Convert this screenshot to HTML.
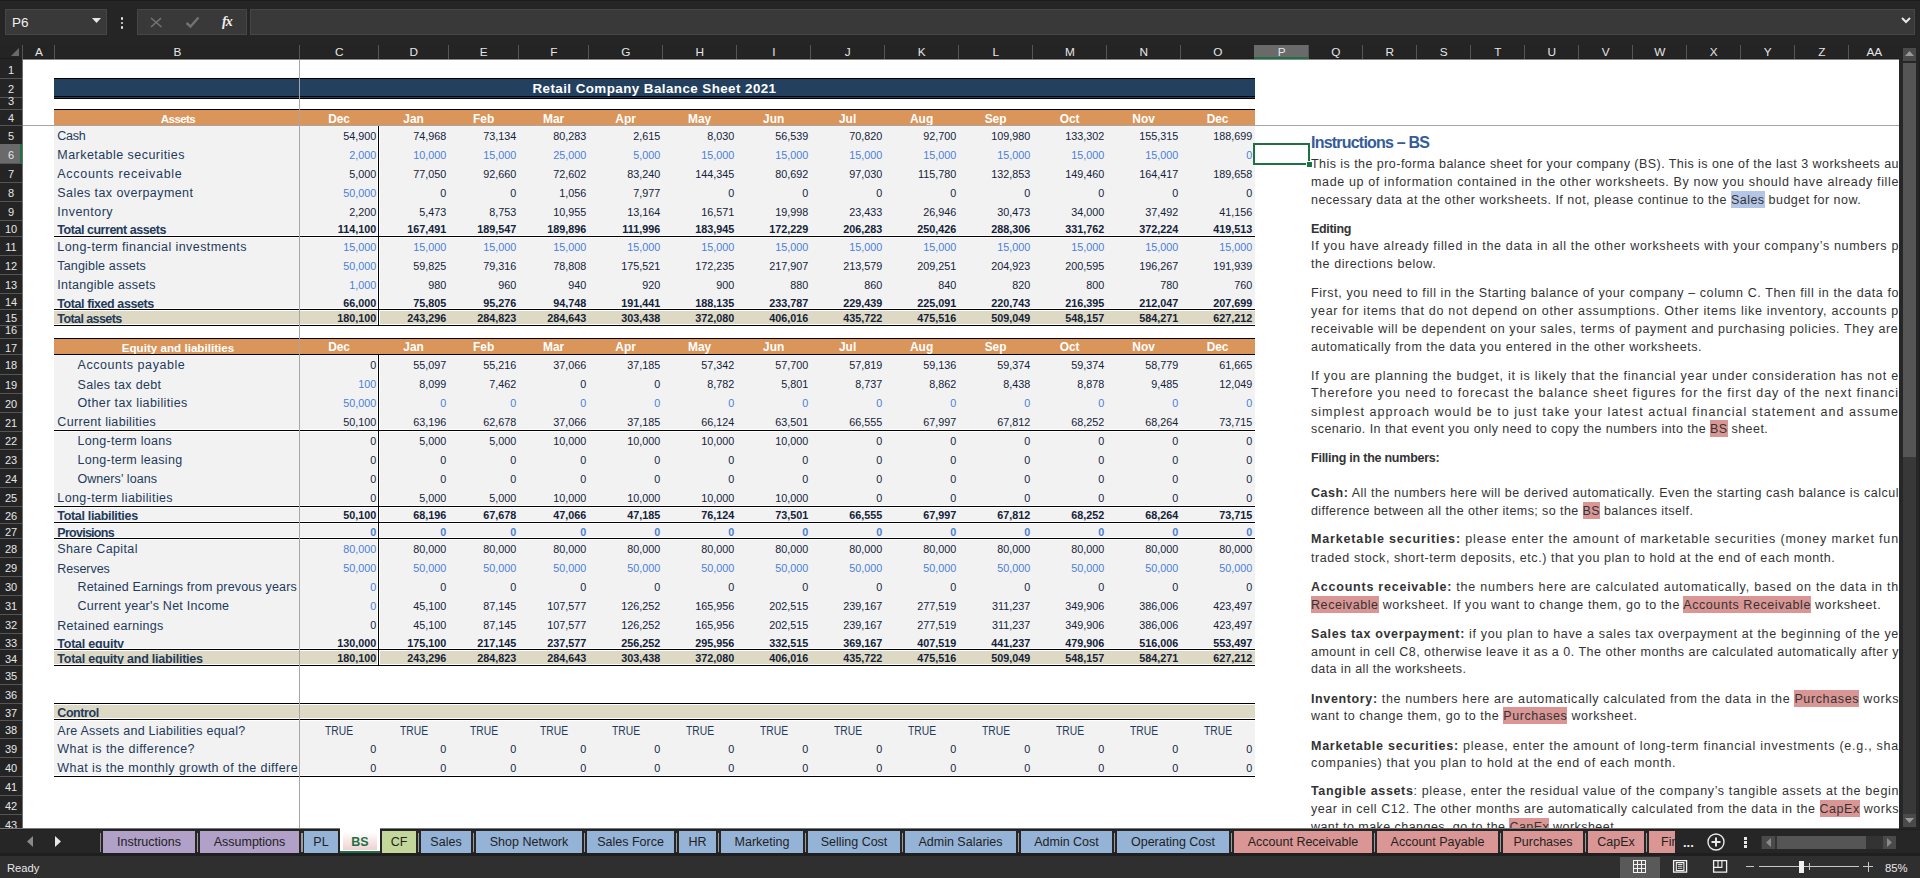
<!DOCTYPE html>
<html><head><meta charset="utf-8"><style>
html,body{margin:0;padding:0;width:1920px;height:878px;overflow:hidden;background:#202020;font-family:"Liberation Sans",sans-serif;}
</style></head><body><div style="position:relative;width:1920px;height:878px;overflow:hidden"><div style="position:absolute;left:0px;top:0px;width:1920px;height:45px;background:#252525"></div><div style="position:absolute;left:0px;top:0px;width:1920px;height:1px;background:#1c1c1c"></div><div style="position:absolute;left:5px;top:9px;width:102px;height:26px;background:#393939;border:1px solid #464646;box-sizing:border-box"></div><div style="position:absolute;top:16.27px;font-family:'Liberation Sans',sans-serif;font-size:13.5px;line-height:13.5px;font-weight:normal;color:#f0f0f0;white-space:nowrap;left:12.00px;">P6</div><svg style="position:absolute;left:92px;top:18px" width="9" height="6"><path d="M0 0 L9 0 L4.5 5z" fill="#e8e8e8"/></svg><div style="position:absolute;left:120.5px;top:17px;width:2.5px;height:2.5px;background:#e8e8e8;border-radius:1px"></div><div style="position:absolute;left:120.5px;top:21.5px;width:2.5px;height:2.5px;background:#e8e8e8;border-radius:1px"></div><div style="position:absolute;left:120.5px;top:26px;width:2.5px;height:2.5px;background:#e8e8e8;border-radius:1px"></div><div style="position:absolute;left:137px;top:9px;width:110px;height:26px;background:#393939;border:1px solid #464646;box-sizing:border-box"></div><svg style="position:absolute;left:150px;top:17px" width="13" height="11"><path d="M1 1 L11.5 10 M11 1.2 L1 10" stroke="#727272" stroke-width="1.6"/></svg><svg style="position:absolute;left:185px;top:16px" width="15" height="13"><path d="M1.5 7 L5.5 10.5 L13.5 1.5" stroke="#727272" stroke-width="2.4" fill="none"/></svg><div style="position:absolute;top:15.25px;font-family:'Liberation Serif',sans-serif;font-size:14px;line-height:14px;font-weight:bold;color:#f0f0f0;white-space:nowrap;font-style:italic;letter-spacing:-1px;left:222.00px;">fx</div><div style="position:absolute;left:250px;top:9px;width:1665px;height:26px;background:#393939;border:1px solid #464646;box-sizing:border-box"></div><svg style="position:absolute;left:1901px;top:17px" width="10" height="7"><path d="M1 1 L5 5 L9 1" stroke="#e8e8e8" stroke-width="2" fill="none"/></svg><div style="position:absolute;left:0px;top:45px;width:1920px;height:14px;background:#242424"></div><div style="position:absolute;left:0px;top:58px;width:1899px;height:1px;background:#1c1c1c"></div><div style="position:absolute;left:0px;top:59px;width:1899px;height:1px;background:#8a8a8a"></div><svg style="position:absolute;left:11px;top:48px" width="8" height="8"><path d="M8 0 L8 8 L0 8z" fill="#6a6a6a"/></svg><div style="position:absolute;left:22px;top:45px;width:1px;height:14px;background:#555"></div><div style="position:absolute;left:54px;top:45px;width:1px;height:14px;background:#555"></div><div style="position:absolute;left:299px;top:45px;width:1px;height:14px;background:#555"></div><div style="position:absolute;left:378px;top:45px;width:1px;height:14px;background:#555"></div><div style="position:absolute;left:448px;top:45px;width:1px;height:14px;background:#555"></div><div style="position:absolute;left:518px;top:45px;width:1px;height:14px;background:#555"></div><div style="position:absolute;left:588px;top:45px;width:1px;height:14px;background:#555"></div><div style="position:absolute;left:662px;top:45px;width:1px;height:14px;background:#555"></div><div style="position:absolute;left:736px;top:45px;width:1px;height:14px;background:#555"></div><div style="position:absolute;left:810px;top:45px;width:1px;height:14px;background:#555"></div><div style="position:absolute;left:884px;top:45px;width:1px;height:14px;background:#555"></div><div style="position:absolute;left:958px;top:45px;width:1px;height:14px;background:#555"></div><div style="position:absolute;left:1032px;top:45px;width:1px;height:14px;background:#555"></div><div style="position:absolute;left:1106px;top:45px;width:1px;height:14px;background:#555"></div><div style="position:absolute;left:1180px;top:45px;width:1px;height:14px;background:#555"></div><div style="position:absolute;left:1254px;top:45px;width:1px;height:14px;background:#555"></div><div style="position:absolute;left:1308px;top:45px;width:1px;height:14px;background:#555"></div><div style="position:absolute;left:1362px;top:45px;width:1px;height:14px;background:#555"></div><div style="position:absolute;left:1416px;top:45px;width:1px;height:14px;background:#555"></div><div style="position:absolute;left:1470px;top:45px;width:1px;height:14px;background:#555"></div><div style="position:absolute;left:1524px;top:45px;width:1px;height:14px;background:#555"></div><div style="position:absolute;left:1578px;top:45px;width:1px;height:14px;background:#555"></div><div style="position:absolute;left:1632px;top:45px;width:1px;height:14px;background:#555"></div><div style="position:absolute;left:1686px;top:45px;width:1px;height:14px;background:#555"></div><div style="position:absolute;left:1740px;top:45px;width:1px;height:14px;background:#555"></div><div style="position:absolute;left:1794px;top:45px;width:1px;height:14px;background:#555"></div><div style="position:absolute;left:1848px;top:45px;width:1px;height:14px;background:#555"></div><div style="position:absolute;left:1254px;top:45px;width:54px;height:14px;background:#6a6a6a"></div><div style="position:absolute;left:1254px;top:57px;width:54px;height:2px;background:#1e7145"></div><div style="position:absolute;top:46.71px;font-family:'Liberation Sans',sans-serif;font-size:11.8px;line-height:11.8px;font-weight:normal;color:#e6e6e6;white-space:nowrap;left:-261.20px;width:600px;text-align:center;">A</div><div style="position:absolute;top:46.71px;font-family:'Liberation Sans',sans-serif;font-size:11.8px;line-height:11.8px;font-weight:normal;color:#e6e6e6;white-space:nowrap;left:-122.70px;width:600px;text-align:center;">B</div><div style="position:absolute;top:46.71px;font-family:'Liberation Sans',sans-serif;font-size:11.8px;line-height:11.8px;font-weight:normal;color:#e6e6e6;white-space:nowrap;left:39.30px;width:600px;text-align:center;">C</div><div style="position:absolute;top:46.71px;font-family:'Liberation Sans',sans-serif;font-size:11.8px;line-height:11.8px;font-weight:normal;color:#e6e6e6;white-space:nowrap;left:113.80px;width:600px;text-align:center;">D</div><div style="position:absolute;top:46.71px;font-family:'Liberation Sans',sans-serif;font-size:11.8px;line-height:11.8px;font-weight:normal;color:#e6e6e6;white-space:nowrap;left:183.80px;width:600px;text-align:center;">E</div><div style="position:absolute;top:46.71px;font-family:'Liberation Sans',sans-serif;font-size:11.8px;line-height:11.8px;font-weight:normal;color:#e6e6e6;white-space:nowrap;left:253.80px;width:600px;text-align:center;">F</div><div style="position:absolute;top:46.71px;font-family:'Liberation Sans',sans-serif;font-size:11.8px;line-height:11.8px;font-weight:normal;color:#e6e6e6;white-space:nowrap;left:325.80px;width:600px;text-align:center;">G</div><div style="position:absolute;top:46.71px;font-family:'Liberation Sans',sans-serif;font-size:11.8px;line-height:11.8px;font-weight:normal;color:#e6e6e6;white-space:nowrap;left:399.80px;width:600px;text-align:center;">H</div><div style="position:absolute;top:46.71px;font-family:'Liberation Sans',sans-serif;font-size:11.8px;line-height:11.8px;font-weight:normal;color:#e6e6e6;white-space:nowrap;left:473.80px;width:600px;text-align:center;">I</div><div style="position:absolute;top:46.71px;font-family:'Liberation Sans',sans-serif;font-size:11.8px;line-height:11.8px;font-weight:normal;color:#e6e6e6;white-space:nowrap;left:547.80px;width:600px;text-align:center;">J</div><div style="position:absolute;top:46.71px;font-family:'Liberation Sans',sans-serif;font-size:11.8px;line-height:11.8px;font-weight:normal;color:#e6e6e6;white-space:nowrap;left:621.80px;width:600px;text-align:center;">K</div><div style="position:absolute;top:46.71px;font-family:'Liberation Sans',sans-serif;font-size:11.8px;line-height:11.8px;font-weight:normal;color:#e6e6e6;white-space:nowrap;left:695.80px;width:600px;text-align:center;">L</div><div style="position:absolute;top:46.71px;font-family:'Liberation Sans',sans-serif;font-size:11.8px;line-height:11.8px;font-weight:normal;color:#e6e6e6;white-space:nowrap;left:769.80px;width:600px;text-align:center;">M</div><div style="position:absolute;top:46.71px;font-family:'Liberation Sans',sans-serif;font-size:11.8px;line-height:11.8px;font-weight:normal;color:#e6e6e6;white-space:nowrap;left:843.80px;width:600px;text-align:center;">N</div><div style="position:absolute;top:46.71px;font-family:'Liberation Sans',sans-serif;font-size:11.8px;line-height:11.8px;font-weight:normal;color:#e6e6e6;white-space:nowrap;left:917.80px;width:600px;text-align:center;">O</div><div style="position:absolute;top:46.71px;font-family:'Liberation Sans',sans-serif;font-size:11.8px;line-height:11.8px;font-weight:normal;color:#e6e6e6;white-space:nowrap;left:981.80px;width:600px;text-align:center;">P</div><div style="position:absolute;top:46.71px;font-family:'Liberation Sans',sans-serif;font-size:11.8px;line-height:11.8px;font-weight:normal;color:#e6e6e6;white-space:nowrap;left:1035.80px;width:600px;text-align:center;">Q</div><div style="position:absolute;top:46.71px;font-family:'Liberation Sans',sans-serif;font-size:11.8px;line-height:11.8px;font-weight:normal;color:#e6e6e6;white-space:nowrap;left:1089.80px;width:600px;text-align:center;">R</div><div style="position:absolute;top:46.71px;font-family:'Liberation Sans',sans-serif;font-size:11.8px;line-height:11.8px;font-weight:normal;color:#e6e6e6;white-space:nowrap;left:1143.80px;width:600px;text-align:center;">S</div><div style="position:absolute;top:46.71px;font-family:'Liberation Sans',sans-serif;font-size:11.8px;line-height:11.8px;font-weight:normal;color:#e6e6e6;white-space:nowrap;left:1197.80px;width:600px;text-align:center;">T</div><div style="position:absolute;top:46.71px;font-family:'Liberation Sans',sans-serif;font-size:11.8px;line-height:11.8px;font-weight:normal;color:#e6e6e6;white-space:nowrap;left:1251.80px;width:600px;text-align:center;">U</div><div style="position:absolute;top:46.71px;font-family:'Liberation Sans',sans-serif;font-size:11.8px;line-height:11.8px;font-weight:normal;color:#e6e6e6;white-space:nowrap;left:1305.80px;width:600px;text-align:center;">V</div><div style="position:absolute;top:46.71px;font-family:'Liberation Sans',sans-serif;font-size:11.8px;line-height:11.8px;font-weight:normal;color:#e6e6e6;white-space:nowrap;left:1359.80px;width:600px;text-align:center;">W</div><div style="position:absolute;top:46.71px;font-family:'Liberation Sans',sans-serif;font-size:11.8px;line-height:11.8px;font-weight:normal;color:#e6e6e6;white-space:nowrap;left:1413.80px;width:600px;text-align:center;">X</div><div style="position:absolute;top:46.71px;font-family:'Liberation Sans',sans-serif;font-size:11.8px;line-height:11.8px;font-weight:normal;color:#e6e6e6;white-space:nowrap;left:1467.80px;width:600px;text-align:center;">Y</div><div style="position:absolute;top:46.71px;font-family:'Liberation Sans',sans-serif;font-size:11.8px;line-height:11.8px;font-weight:normal;color:#e6e6e6;white-space:nowrap;left:1521.80px;width:600px;text-align:center;">Z</div><div style="position:absolute;top:46.71px;font-family:'Liberation Sans',sans-serif;font-size:11.8px;line-height:11.8px;font-weight:normal;color:#e6e6e6;white-space:nowrap;left:1574.30px;width:600px;text-align:center;">AA</div><div style="position:absolute;left:0px;top:59px;width:22px;height:769px;background:#242424"></div><div style="position:absolute;left:22px;top:59px;width:1px;height:769px;background:#6e6e6e"></div><div style="position:absolute;left:0px;top:78px;width:22px;height:1px;background:#555"></div><div style="position:absolute;top:64.59px;font-family:'Liberation Sans',sans-serif;font-size:11px;line-height:11px;font-weight:normal;color:#e6e6e6;white-space:nowrap;left:-289.00px;width:600px;text-align:center;">1</div><div style="position:absolute;left:0px;top:97px;width:22px;height:1px;background:#555"></div><div style="position:absolute;top:83.59px;font-family:'Liberation Sans',sans-serif;font-size:11px;line-height:11px;font-weight:normal;color:#e6e6e6;white-space:nowrap;left:-289.00px;width:600px;text-align:center;">2</div><div style="position:absolute;left:0px;top:109px;width:22px;height:1px;background:#555"></div><div style="position:absolute;top:96.49px;font-family:'Liberation Sans',sans-serif;font-size:11px;line-height:11px;font-weight:normal;color:#e6e6e6;white-space:nowrap;left:-289.00px;width:600px;text-align:center;">3</div><div style="position:absolute;left:0px;top:125px;width:22px;height:1px;background:#555"></div><div style="position:absolute;top:113.09px;font-family:'Liberation Sans',sans-serif;font-size:11px;line-height:11px;font-weight:normal;color:#e6e6e6;white-space:nowrap;left:-289.00px;width:600px;text-align:center;">4</div><div style="position:absolute;left:0px;top:144px;width:22px;height:1px;background:#555"></div><div style="position:absolute;top:130.59px;font-family:'Liberation Sans',sans-serif;font-size:11px;line-height:11px;font-weight:normal;color:#e6e6e6;white-space:nowrap;left:-289.00px;width:600px;text-align:center;">5</div><div style="position:absolute;left:0px;top:144px;width:22px;height:19.5px;background:#6a6a6a"></div><div style="position:absolute;left:20px;top:144px;width:2px;height:19.5px;background:#1e7145"></div><div style="position:absolute;left:0px;top:163px;width:22px;height:1px;background:#555"></div><div style="position:absolute;top:149.84px;font-family:'Liberation Sans',sans-serif;font-size:11px;line-height:11px;font-weight:normal;color:#e6e6e6;white-space:nowrap;left:-289.00px;width:600px;text-align:center;">6</div><div style="position:absolute;left:0px;top:182px;width:22px;height:1px;background:#555"></div><div style="position:absolute;top:169.09px;font-family:'Liberation Sans',sans-serif;font-size:11px;line-height:11px;font-weight:normal;color:#e6e6e6;white-space:nowrap;left:-289.00px;width:600px;text-align:center;">7</div><div style="position:absolute;left:0px;top:201px;width:22px;height:1px;background:#555"></div><div style="position:absolute;top:188.09px;font-family:'Liberation Sans',sans-serif;font-size:11px;line-height:11px;font-weight:normal;color:#e6e6e6;white-space:nowrap;left:-289.00px;width:600px;text-align:center;">8</div><div style="position:absolute;left:0px;top:220px;width:22px;height:1px;background:#555"></div><div style="position:absolute;top:207.09px;font-family:'Liberation Sans',sans-serif;font-size:11px;line-height:11px;font-weight:normal;color:#e6e6e6;white-space:nowrap;left:-289.00px;width:600px;text-align:center;">9</div><div style="position:absolute;left:0px;top:236px;width:22px;height:1px;background:#555"></div><div style="position:absolute;top:224.34px;font-family:'Liberation Sans',sans-serif;font-size:11px;line-height:11px;font-weight:normal;color:#e6e6e6;white-space:nowrap;left:-289.00px;width:600px;text-align:center;">10</div><div style="position:absolute;left:0px;top:255px;width:22px;height:1px;background:#555"></div><div style="position:absolute;top:241.59px;font-family:'Liberation Sans',sans-serif;font-size:11px;line-height:11px;font-weight:normal;color:#e6e6e6;white-space:nowrap;left:-289.00px;width:600px;text-align:center;">11</div><div style="position:absolute;left:0px;top:274px;width:22px;height:1px;background:#555"></div><div style="position:absolute;top:260.59px;font-family:'Liberation Sans',sans-serif;font-size:11px;line-height:11px;font-weight:normal;color:#e6e6e6;white-space:nowrap;left:-289.00px;width:600px;text-align:center;">12</div><div style="position:absolute;left:0px;top:293px;width:22px;height:1px;background:#555"></div><div style="position:absolute;top:279.84px;font-family:'Liberation Sans',sans-serif;font-size:11px;line-height:11px;font-weight:normal;color:#e6e6e6;white-space:nowrap;left:-289.00px;width:600px;text-align:center;">13</div><div style="position:absolute;left:0px;top:309px;width:22px;height:1px;background:#555"></div><div style="position:absolute;top:297.34px;font-family:'Liberation Sans',sans-serif;font-size:11px;line-height:11px;font-weight:normal;color:#e6e6e6;white-space:nowrap;left:-289.00px;width:600px;text-align:center;">14</div><div style="position:absolute;left:0px;top:325px;width:22px;height:1px;background:#555"></div><div style="position:absolute;top:313.34px;font-family:'Liberation Sans',sans-serif;font-size:11px;line-height:11px;font-weight:normal;color:#e6e6e6;white-space:nowrap;left:-289.00px;width:600px;text-align:center;">15</div><div style="position:absolute;left:0px;top:338px;width:22px;height:1px;background:#555"></div><div style="position:absolute;top:325.49px;font-family:'Liberation Sans',sans-serif;font-size:11px;line-height:11px;font-weight:normal;color:#e6e6e6;white-space:nowrap;left:-289.00px;width:600px;text-align:center;">16</div><div style="position:absolute;left:0px;top:354px;width:22px;height:1px;background:#555"></div><div style="position:absolute;top:342.59px;font-family:'Liberation Sans',sans-serif;font-size:11px;line-height:11px;font-weight:normal;color:#e6e6e6;white-space:nowrap;left:-289.00px;width:600px;text-align:center;">17</div><div style="position:absolute;left:0px;top:374px;width:22px;height:1px;background:#555"></div><div style="position:absolute;top:360.34px;font-family:'Liberation Sans',sans-serif;font-size:11px;line-height:11px;font-weight:normal;color:#e6e6e6;white-space:nowrap;left:-289.00px;width:600px;text-align:center;">18</div><div style="position:absolute;left:0px;top:393px;width:22px;height:1px;background:#555"></div><div style="position:absolute;top:379.59px;font-family:'Liberation Sans',sans-serif;font-size:11px;line-height:11px;font-weight:normal;color:#e6e6e6;white-space:nowrap;left:-289.00px;width:600px;text-align:center;">19</div><div style="position:absolute;left:0px;top:412px;width:22px;height:1px;background:#555"></div><div style="position:absolute;top:398.59px;font-family:'Liberation Sans',sans-serif;font-size:11px;line-height:11px;font-weight:normal;color:#e6e6e6;white-space:nowrap;left:-289.00px;width:600px;text-align:center;">20</div><div style="position:absolute;left:0px;top:431px;width:22px;height:1px;background:#555"></div><div style="position:absolute;top:417.59px;font-family:'Liberation Sans',sans-serif;font-size:11px;line-height:11px;font-weight:normal;color:#e6e6e6;white-space:nowrap;left:-289.00px;width:600px;text-align:center;">21</div><div style="position:absolute;left:0px;top:449px;width:22px;height:1px;background:#555"></div><div style="position:absolute;top:436.34px;font-family:'Liberation Sans',sans-serif;font-size:11px;line-height:11px;font-weight:normal;color:#e6e6e6;white-space:nowrap;left:-289.00px;width:600px;text-align:center;">22</div><div style="position:absolute;left:0px;top:468px;width:22px;height:1px;background:#555"></div><div style="position:absolute;top:455.09px;font-family:'Liberation Sans',sans-serif;font-size:11px;line-height:11px;font-weight:normal;color:#e6e6e6;white-space:nowrap;left:-289.00px;width:600px;text-align:center;">23</div><div style="position:absolute;left:0px;top:487px;width:22px;height:1px;background:#555"></div><div style="position:absolute;top:474.09px;font-family:'Liberation Sans',sans-serif;font-size:11px;line-height:11px;font-weight:normal;color:#e6e6e6;white-space:nowrap;left:-289.00px;width:600px;text-align:center;">24</div><div style="position:absolute;left:0px;top:506px;width:22px;height:1px;background:#555"></div><div style="position:absolute;top:493.09px;font-family:'Liberation Sans',sans-serif;font-size:11px;line-height:11px;font-weight:normal;color:#e6e6e6;white-space:nowrap;left:-289.00px;width:600px;text-align:center;">25</div><div style="position:absolute;left:0px;top:523px;width:22px;height:1px;background:#555"></div><div style="position:absolute;top:510.84px;font-family:'Liberation Sans',sans-serif;font-size:11px;line-height:11px;font-weight:normal;color:#e6e6e6;white-space:nowrap;left:-289.00px;width:600px;text-align:center;">26</div><div style="position:absolute;left:0px;top:538px;width:22px;height:1px;background:#555"></div><div style="position:absolute;top:526.84px;font-family:'Liberation Sans',sans-serif;font-size:11px;line-height:11px;font-weight:normal;color:#e6e6e6;white-space:nowrap;left:-289.00px;width:600px;text-align:center;">27</div><div style="position:absolute;left:0px;top:557px;width:22px;height:1px;background:#555"></div><div style="position:absolute;top:544.09px;font-family:'Liberation Sans',sans-serif;font-size:11px;line-height:11px;font-weight:normal;color:#e6e6e6;white-space:nowrap;left:-289.00px;width:600px;text-align:center;">28</div><div style="position:absolute;left:0px;top:576px;width:22px;height:1px;background:#555"></div><div style="position:absolute;top:563.09px;font-family:'Liberation Sans',sans-serif;font-size:11px;line-height:11px;font-weight:normal;color:#e6e6e6;white-space:nowrap;left:-289.00px;width:600px;text-align:center;">29</div><div style="position:absolute;left:0px;top:595px;width:22px;height:1px;background:#555"></div><div style="position:absolute;top:582.09px;font-family:'Liberation Sans',sans-serif;font-size:11px;line-height:11px;font-weight:normal;color:#e6e6e6;white-space:nowrap;left:-289.00px;width:600px;text-align:center;">30</div><div style="position:absolute;left:0px;top:614px;width:22px;height:1px;background:#555"></div><div style="position:absolute;top:601.09px;font-family:'Liberation Sans',sans-serif;font-size:11px;line-height:11px;font-weight:normal;color:#e6e6e6;white-space:nowrap;left:-289.00px;width:600px;text-align:center;">31</div><div style="position:absolute;left:0px;top:633px;width:22px;height:1px;background:#555"></div><div style="position:absolute;top:620.09px;font-family:'Liberation Sans',sans-serif;font-size:11px;line-height:11px;font-weight:normal;color:#e6e6e6;white-space:nowrap;left:-289.00px;width:600px;text-align:center;">32</div><div style="position:absolute;left:0px;top:649px;width:22px;height:1px;background:#555"></div><div style="position:absolute;top:637.59px;font-family:'Liberation Sans',sans-serif;font-size:11px;line-height:11px;font-weight:normal;color:#e6e6e6;white-space:nowrap;left:-289.00px;width:600px;text-align:center;">33</div><div style="position:absolute;left:0px;top:665px;width:22px;height:1px;background:#555"></div><div style="position:absolute;top:653.59px;font-family:'Liberation Sans',sans-serif;font-size:11px;line-height:11px;font-weight:normal;color:#e6e6e6;white-space:nowrap;left:-289.00px;width:600px;text-align:center;">34</div><div style="position:absolute;left:0px;top:684px;width:22px;height:1px;background:#555"></div><div style="position:absolute;top:671.09px;font-family:'Liberation Sans',sans-serif;font-size:11px;line-height:11px;font-weight:normal;color:#e6e6e6;white-space:nowrap;left:-289.00px;width:600px;text-align:center;">35</div><div style="position:absolute;left:0px;top:703px;width:22px;height:1px;background:#555"></div><div style="position:absolute;top:690.09px;font-family:'Liberation Sans',sans-serif;font-size:11px;line-height:11px;font-weight:normal;color:#e6e6e6;white-space:nowrap;left:-289.00px;width:600px;text-align:center;">36</div><div style="position:absolute;left:0px;top:720px;width:22px;height:1px;background:#555"></div><div style="position:absolute;top:707.84px;font-family:'Liberation Sans',sans-serif;font-size:11px;line-height:11px;font-weight:normal;color:#e6e6e6;white-space:nowrap;left:-289.00px;width:600px;text-align:center;">37</div><div style="position:absolute;left:0px;top:738px;width:22px;height:1px;background:#555"></div><div style="position:absolute;top:725.34px;font-family:'Liberation Sans',sans-serif;font-size:11px;line-height:11px;font-weight:normal;color:#e6e6e6;white-space:nowrap;left:-289.00px;width:600px;text-align:center;">38</div><div style="position:absolute;left:0px;top:757px;width:22px;height:1px;background:#555"></div><div style="position:absolute;top:744.09px;font-family:'Liberation Sans',sans-serif;font-size:11px;line-height:11px;font-weight:normal;color:#e6e6e6;white-space:nowrap;left:-289.00px;width:600px;text-align:center;">39</div><div style="position:absolute;left:0px;top:776px;width:22px;height:1px;background:#555"></div><div style="position:absolute;top:763.09px;font-family:'Liberation Sans',sans-serif;font-size:11px;line-height:11px;font-weight:normal;color:#e6e6e6;white-space:nowrap;left:-289.00px;width:600px;text-align:center;">40</div><div style="position:absolute;left:0px;top:795px;width:22px;height:1px;background:#555"></div><div style="position:absolute;top:782.09px;font-family:'Liberation Sans',sans-serif;font-size:11px;line-height:11px;font-weight:normal;color:#e6e6e6;white-space:nowrap;left:-289.00px;width:600px;text-align:center;">41</div><div style="position:absolute;left:0px;top:814px;width:22px;height:1px;background:#555"></div><div style="position:absolute;top:801.09px;font-family:'Liberation Sans',sans-serif;font-size:11px;line-height:11px;font-weight:normal;color:#e6e6e6;white-space:nowrap;left:-289.00px;width:600px;text-align:center;">42</div><div style="position:absolute;top:820.09px;font-family:'Liberation Sans',sans-serif;font-size:11px;line-height:11px;font-weight:normal;color:#e6e6e6;white-space:nowrap;left:-289.00px;width:600px;text-align:center;">43</div><div style="position:absolute;left:23px;top:60px;width:1876px;height:768px;background:#fff"></div><div style="position:absolute;left:54px;top:78px;width:1201px;height:21px;background:#23405f"></div><div style="position:absolute;left:54px;top:78px;width:1201px;height:1px;background:#000"></div><div style="position:absolute;left:54px;top:96px;width:1201px;height:1px;background:#000"></div><div style="position:absolute;left:54px;top:98px;width:1201px;height:1px;background:#000"></div><div style="position:absolute;top:82.26px;font-family:'Liberation Sans',sans-serif;font-size:13.4px;line-height:13.4px;font-weight:bold;color:#fff;white-space:nowrap;letter-spacing:0.425px;left:354.50px;width:600px;text-align:center;">Retail Company Balance Sheet 2021</div><div style="position:absolute;left:54px;top:109px;width:1201px;height:16px;background:#da955b"></div><div style="position:absolute;left:54px;top:109px;width:1201px;height:1px;background:#000"></div><div style="position:absolute;top:113.28px;font-family:'Liberation Sans',sans-serif;font-size:11.6px;line-height:11.6px;font-weight:bold;color:#fff;white-space:nowrap;letter-spacing:-0.622px;left:-122.00px;width:600px;text-align:center;">Assets</div><div style="position:absolute;top:113.93px;font-family:'Liberation Sans',sans-serif;font-size:11.9px;line-height:11.9px;font-weight:bold;color:#fff;white-space:nowrap;left:39.10px;width:600px;text-align:center;">Dec</div><div style="position:absolute;top:113.93px;font-family:'Liberation Sans',sans-serif;font-size:11.9px;line-height:11.9px;font-weight:bold;color:#fff;white-space:nowrap;left:113.60px;width:600px;text-align:center;">Jan</div><div style="position:absolute;top:113.93px;font-family:'Liberation Sans',sans-serif;font-size:11.9px;line-height:11.9px;font-weight:bold;color:#fff;white-space:nowrap;left:183.60px;width:600px;text-align:center;">Feb</div><div style="position:absolute;top:113.93px;font-family:'Liberation Sans',sans-serif;font-size:11.9px;line-height:11.9px;font-weight:bold;color:#fff;white-space:nowrap;left:253.60px;width:600px;text-align:center;">Mar</div><div style="position:absolute;top:113.93px;font-family:'Liberation Sans',sans-serif;font-size:11.9px;line-height:11.9px;font-weight:bold;color:#fff;white-space:nowrap;left:325.60px;width:600px;text-align:center;">Apr</div><div style="position:absolute;top:113.93px;font-family:'Liberation Sans',sans-serif;font-size:11.9px;line-height:11.9px;font-weight:bold;color:#fff;white-space:nowrap;left:399.60px;width:600px;text-align:center;">May</div><div style="position:absolute;top:113.93px;font-family:'Liberation Sans',sans-serif;font-size:11.9px;line-height:11.9px;font-weight:bold;color:#fff;white-space:nowrap;left:473.60px;width:600px;text-align:center;">Jun</div><div style="position:absolute;top:113.93px;font-family:'Liberation Sans',sans-serif;font-size:11.9px;line-height:11.9px;font-weight:bold;color:#fff;white-space:nowrap;left:547.60px;width:600px;text-align:center;">Jul</div><div style="position:absolute;top:113.93px;font-family:'Liberation Sans',sans-serif;font-size:11.9px;line-height:11.9px;font-weight:bold;color:#fff;white-space:nowrap;left:621.60px;width:600px;text-align:center;">Aug</div><div style="position:absolute;top:113.93px;font-family:'Liberation Sans',sans-serif;font-size:11.9px;line-height:11.9px;font-weight:bold;color:#fff;white-space:nowrap;left:695.60px;width:600px;text-align:center;">Sep</div><div style="position:absolute;top:113.93px;font-family:'Liberation Sans',sans-serif;font-size:11.9px;line-height:11.9px;font-weight:bold;color:#fff;white-space:nowrap;left:769.60px;width:600px;text-align:center;">Oct</div><div style="position:absolute;top:113.93px;font-family:'Liberation Sans',sans-serif;font-size:11.9px;line-height:11.9px;font-weight:bold;color:#fff;white-space:nowrap;left:843.60px;width:600px;text-align:center;">Nov</div><div style="position:absolute;top:113.93px;font-family:'Liberation Sans',sans-serif;font-size:11.9px;line-height:11.9px;font-weight:bold;color:#fff;white-space:nowrap;left:917.60px;width:600px;text-align:center;">Dec</div><div style="position:absolute;left:54px;top:125px;width:1201px;height:200px;background:#f2f2f2"></div><div style="position:absolute;left:54px;top:338px;width:1201px;height:16.5px;background:#da955b"></div><div style="position:absolute;left:54px;top:338px;width:1201px;height:1px;background:#000"></div><div style="position:absolute;top:341.58px;font-family:'Liberation Sans',sans-serif;font-size:11.6px;line-height:11.6px;font-weight:bold;color:#fff;white-space:nowrap;letter-spacing:0.018px;left:-122.00px;width:600px;text-align:center;">Equity and liabilities</div><div style="position:absolute;top:342.23px;font-family:'Liberation Sans',sans-serif;font-size:11.9px;line-height:11.9px;font-weight:bold;color:#fff;white-space:nowrap;left:39.10px;width:600px;text-align:center;">Dec</div><div style="position:absolute;top:342.23px;font-family:'Liberation Sans',sans-serif;font-size:11.9px;line-height:11.9px;font-weight:bold;color:#fff;white-space:nowrap;left:113.60px;width:600px;text-align:center;">Jan</div><div style="position:absolute;top:342.23px;font-family:'Liberation Sans',sans-serif;font-size:11.9px;line-height:11.9px;font-weight:bold;color:#fff;white-space:nowrap;left:183.60px;width:600px;text-align:center;">Feb</div><div style="position:absolute;top:342.23px;font-family:'Liberation Sans',sans-serif;font-size:11.9px;line-height:11.9px;font-weight:bold;color:#fff;white-space:nowrap;left:253.60px;width:600px;text-align:center;">Mar</div><div style="position:absolute;top:342.23px;font-family:'Liberation Sans',sans-serif;font-size:11.9px;line-height:11.9px;font-weight:bold;color:#fff;white-space:nowrap;left:325.60px;width:600px;text-align:center;">Apr</div><div style="position:absolute;top:342.23px;font-family:'Liberation Sans',sans-serif;font-size:11.9px;line-height:11.9px;font-weight:bold;color:#fff;white-space:nowrap;left:399.60px;width:600px;text-align:center;">May</div><div style="position:absolute;top:342.23px;font-family:'Liberation Sans',sans-serif;font-size:11.9px;line-height:11.9px;font-weight:bold;color:#fff;white-space:nowrap;left:473.60px;width:600px;text-align:center;">Jun</div><div style="position:absolute;top:342.23px;font-family:'Liberation Sans',sans-serif;font-size:11.9px;line-height:11.9px;font-weight:bold;color:#fff;white-space:nowrap;left:547.60px;width:600px;text-align:center;">Jul</div><div style="position:absolute;top:342.23px;font-family:'Liberation Sans',sans-serif;font-size:11.9px;line-height:11.9px;font-weight:bold;color:#fff;white-space:nowrap;left:621.60px;width:600px;text-align:center;">Aug</div><div style="position:absolute;top:342.23px;font-family:'Liberation Sans',sans-serif;font-size:11.9px;line-height:11.9px;font-weight:bold;color:#fff;white-space:nowrap;left:695.60px;width:600px;text-align:center;">Sep</div><div style="position:absolute;top:342.23px;font-family:'Liberation Sans',sans-serif;font-size:11.9px;line-height:11.9px;font-weight:bold;color:#fff;white-space:nowrap;left:769.60px;width:600px;text-align:center;">Oct</div><div style="position:absolute;top:342.23px;font-family:'Liberation Sans',sans-serif;font-size:11.9px;line-height:11.9px;font-weight:bold;color:#fff;white-space:nowrap;left:843.60px;width:600px;text-align:center;">Nov</div><div style="position:absolute;top:342.23px;font-family:'Liberation Sans',sans-serif;font-size:11.9px;line-height:11.9px;font-weight:bold;color:#fff;white-space:nowrap;left:917.60px;width:600px;text-align:center;">Dec</div><div style="position:absolute;left:54px;top:355px;width:1201px;height:310px;background:#f2f2f2"></div><div style="position:absolute;left:54px;top:704px;width:1201px;height:72px;background:#f2f2f2"></div><div style="position:absolute;left:54px;top:309px;width:1201px;height:16px;background:#ddd9c4"></div><div style="position:absolute;left:54px;top:649px;width:1201px;height:16px;background:#ddd9c4"></div><div style="position:absolute;left:54px;top:703px;width:1201px;height:16px;background:#ddd9c4"></div><div style="position:absolute;top:130.42px;font-family:'Liberation Sans',sans-serif;font-size:12.5px;line-height:12.5px;font-weight:normal;color:#233a5a;white-space:nowrap;letter-spacing:-0.272px;left:57.30px;">Cash</div><div style="position:absolute;top:131.16px;font-family:'Liberation Sans',sans-serif;font-size:10.8px;line-height:10.8px;font-weight:normal;color:#14233a;white-space:nowrap;left:-223.80px;width:600px;text-align:right;">54,900</div><div style="position:absolute;top:131.16px;font-family:'Liberation Sans',sans-serif;font-size:10.8px;line-height:10.8px;font-weight:normal;color:#14233a;white-space:nowrap;left:-153.80px;width:600px;text-align:right;">74,968</div><div style="position:absolute;top:131.16px;font-family:'Liberation Sans',sans-serif;font-size:10.8px;line-height:10.8px;font-weight:normal;color:#14233a;white-space:nowrap;left:-83.80px;width:600px;text-align:right;">73,134</div><div style="position:absolute;top:131.16px;font-family:'Liberation Sans',sans-serif;font-size:10.8px;line-height:10.8px;font-weight:normal;color:#14233a;white-space:nowrap;left:-13.80px;width:600px;text-align:right;">80,283</div><div style="position:absolute;top:131.16px;font-family:'Liberation Sans',sans-serif;font-size:10.8px;line-height:10.8px;font-weight:normal;color:#14233a;white-space:nowrap;left:60.20px;width:600px;text-align:right;">2,615</div><div style="position:absolute;top:131.16px;font-family:'Liberation Sans',sans-serif;font-size:10.8px;line-height:10.8px;font-weight:normal;color:#14233a;white-space:nowrap;left:134.20px;width:600px;text-align:right;">8,030</div><div style="position:absolute;top:131.16px;font-family:'Liberation Sans',sans-serif;font-size:10.8px;line-height:10.8px;font-weight:normal;color:#14233a;white-space:nowrap;left:208.20px;width:600px;text-align:right;">56,539</div><div style="position:absolute;top:131.16px;font-family:'Liberation Sans',sans-serif;font-size:10.8px;line-height:10.8px;font-weight:normal;color:#14233a;white-space:nowrap;left:282.20px;width:600px;text-align:right;">70,820</div><div style="position:absolute;top:131.16px;font-family:'Liberation Sans',sans-serif;font-size:10.8px;line-height:10.8px;font-weight:normal;color:#14233a;white-space:nowrap;left:356.20px;width:600px;text-align:right;">92,700</div><div style="position:absolute;top:131.16px;font-family:'Liberation Sans',sans-serif;font-size:10.8px;line-height:10.8px;font-weight:normal;color:#14233a;white-space:nowrap;left:430.20px;width:600px;text-align:right;">109,980</div><div style="position:absolute;top:131.16px;font-family:'Liberation Sans',sans-serif;font-size:10.8px;line-height:10.8px;font-weight:normal;color:#14233a;white-space:nowrap;left:504.20px;width:600px;text-align:right;">133,302</div><div style="position:absolute;top:131.16px;font-family:'Liberation Sans',sans-serif;font-size:10.8px;line-height:10.8px;font-weight:normal;color:#14233a;white-space:nowrap;left:578.20px;width:600px;text-align:right;">155,315</div><div style="position:absolute;top:131.16px;font-family:'Liberation Sans',sans-serif;font-size:10.8px;line-height:10.8px;font-weight:normal;color:#14233a;white-space:nowrap;left:652.20px;width:600px;text-align:right;">188,699</div><div style="position:absolute;top:149.32px;font-family:'Liberation Sans',sans-serif;font-size:12.5px;line-height:12.5px;font-weight:normal;color:#233a5a;white-space:nowrap;letter-spacing:0.452px;left:57.30px;">Marketable securities</div><div style="position:absolute;top:150.06px;font-family:'Liberation Sans',sans-serif;font-size:10.8px;line-height:10.8px;font-weight:normal;color:#4a7fd6;white-space:nowrap;left:-223.80px;width:600px;text-align:right;">2,000</div><div style="position:absolute;top:150.06px;font-family:'Liberation Sans',sans-serif;font-size:10.8px;line-height:10.8px;font-weight:normal;color:#4a7fd6;white-space:nowrap;left:-153.80px;width:600px;text-align:right;">10,000</div><div style="position:absolute;top:150.06px;font-family:'Liberation Sans',sans-serif;font-size:10.8px;line-height:10.8px;font-weight:normal;color:#4a7fd6;white-space:nowrap;left:-83.80px;width:600px;text-align:right;">15,000</div><div style="position:absolute;top:150.06px;font-family:'Liberation Sans',sans-serif;font-size:10.8px;line-height:10.8px;font-weight:normal;color:#4a7fd6;white-space:nowrap;left:-13.80px;width:600px;text-align:right;">25,000</div><div style="position:absolute;top:150.06px;font-family:'Liberation Sans',sans-serif;font-size:10.8px;line-height:10.8px;font-weight:normal;color:#4a7fd6;white-space:nowrap;left:60.20px;width:600px;text-align:right;">5,000</div><div style="position:absolute;top:150.06px;font-family:'Liberation Sans',sans-serif;font-size:10.8px;line-height:10.8px;font-weight:normal;color:#4a7fd6;white-space:nowrap;left:134.20px;width:600px;text-align:right;">15,000</div><div style="position:absolute;top:150.06px;font-family:'Liberation Sans',sans-serif;font-size:10.8px;line-height:10.8px;font-weight:normal;color:#4a7fd6;white-space:nowrap;left:208.20px;width:600px;text-align:right;">15,000</div><div style="position:absolute;top:150.06px;font-family:'Liberation Sans',sans-serif;font-size:10.8px;line-height:10.8px;font-weight:normal;color:#4a7fd6;white-space:nowrap;left:282.20px;width:600px;text-align:right;">15,000</div><div style="position:absolute;top:150.06px;font-family:'Liberation Sans',sans-serif;font-size:10.8px;line-height:10.8px;font-weight:normal;color:#4a7fd6;white-space:nowrap;left:356.20px;width:600px;text-align:right;">15,000</div><div style="position:absolute;top:150.06px;font-family:'Liberation Sans',sans-serif;font-size:10.8px;line-height:10.8px;font-weight:normal;color:#4a7fd6;white-space:nowrap;left:430.20px;width:600px;text-align:right;">15,000</div><div style="position:absolute;top:150.06px;font-family:'Liberation Sans',sans-serif;font-size:10.8px;line-height:10.8px;font-weight:normal;color:#4a7fd6;white-space:nowrap;left:504.20px;width:600px;text-align:right;">15,000</div><div style="position:absolute;top:150.06px;font-family:'Liberation Sans',sans-serif;font-size:10.8px;line-height:10.8px;font-weight:normal;color:#4a7fd6;white-space:nowrap;left:578.20px;width:600px;text-align:right;">15,000</div><div style="position:absolute;top:150.06px;font-family:'Liberation Sans',sans-serif;font-size:10.8px;line-height:10.8px;font-weight:normal;color:#4a7fd6;white-space:nowrap;left:652.20px;width:600px;text-align:right;">0</div><div style="position:absolute;top:168.02px;font-family:'Liberation Sans',sans-serif;font-size:12.5px;line-height:12.5px;font-weight:normal;color:#233a5a;white-space:nowrap;letter-spacing:0.701px;left:57.30px;">Accounts receivable</div><div style="position:absolute;top:168.76px;font-family:'Liberation Sans',sans-serif;font-size:10.8px;line-height:10.8px;font-weight:normal;color:#14233a;white-space:nowrap;left:-223.80px;width:600px;text-align:right;">5,000</div><div style="position:absolute;top:168.76px;font-family:'Liberation Sans',sans-serif;font-size:10.8px;line-height:10.8px;font-weight:normal;color:#14233a;white-space:nowrap;left:-153.80px;width:600px;text-align:right;">77,050</div><div style="position:absolute;top:168.76px;font-family:'Liberation Sans',sans-serif;font-size:10.8px;line-height:10.8px;font-weight:normal;color:#14233a;white-space:nowrap;left:-83.80px;width:600px;text-align:right;">92,660</div><div style="position:absolute;top:168.76px;font-family:'Liberation Sans',sans-serif;font-size:10.8px;line-height:10.8px;font-weight:normal;color:#14233a;white-space:nowrap;left:-13.80px;width:600px;text-align:right;">72,602</div><div style="position:absolute;top:168.76px;font-family:'Liberation Sans',sans-serif;font-size:10.8px;line-height:10.8px;font-weight:normal;color:#14233a;white-space:nowrap;left:60.20px;width:600px;text-align:right;">83,240</div><div style="position:absolute;top:168.76px;font-family:'Liberation Sans',sans-serif;font-size:10.8px;line-height:10.8px;font-weight:normal;color:#14233a;white-space:nowrap;left:134.20px;width:600px;text-align:right;">144,345</div><div style="position:absolute;top:168.76px;font-family:'Liberation Sans',sans-serif;font-size:10.8px;line-height:10.8px;font-weight:normal;color:#14233a;white-space:nowrap;left:208.20px;width:600px;text-align:right;">80,692</div><div style="position:absolute;top:168.76px;font-family:'Liberation Sans',sans-serif;font-size:10.8px;line-height:10.8px;font-weight:normal;color:#14233a;white-space:nowrap;left:282.20px;width:600px;text-align:right;">97,030</div><div style="position:absolute;top:168.76px;font-family:'Liberation Sans',sans-serif;font-size:10.8px;line-height:10.8px;font-weight:normal;color:#14233a;white-space:nowrap;left:356.20px;width:600px;text-align:right;">115,780</div><div style="position:absolute;top:168.76px;font-family:'Liberation Sans',sans-serif;font-size:10.8px;line-height:10.8px;font-weight:normal;color:#14233a;white-space:nowrap;left:430.20px;width:600px;text-align:right;">132,853</div><div style="position:absolute;top:168.76px;font-family:'Liberation Sans',sans-serif;font-size:10.8px;line-height:10.8px;font-weight:normal;color:#14233a;white-space:nowrap;left:504.20px;width:600px;text-align:right;">149,460</div><div style="position:absolute;top:168.76px;font-family:'Liberation Sans',sans-serif;font-size:10.8px;line-height:10.8px;font-weight:normal;color:#14233a;white-space:nowrap;left:578.20px;width:600px;text-align:right;">164,417</div><div style="position:absolute;top:168.76px;font-family:'Liberation Sans',sans-serif;font-size:10.8px;line-height:10.8px;font-weight:normal;color:#14233a;white-space:nowrap;left:652.20px;width:600px;text-align:right;">189,658</div><div style="position:absolute;top:186.92px;font-family:'Liberation Sans',sans-serif;font-size:12.5px;line-height:12.5px;font-weight:normal;color:#233a5a;white-space:nowrap;letter-spacing:0.426px;left:57.30px;">Sales tax overpayment</div><div style="position:absolute;top:187.66px;font-family:'Liberation Sans',sans-serif;font-size:10.8px;line-height:10.8px;font-weight:normal;color:#4a7fd6;white-space:nowrap;left:-223.80px;width:600px;text-align:right;">50,000</div><div style="position:absolute;top:187.66px;font-family:'Liberation Sans',sans-serif;font-size:10.8px;line-height:10.8px;font-weight:normal;color:#14233a;white-space:nowrap;left:-153.80px;width:600px;text-align:right;">0</div><div style="position:absolute;top:187.66px;font-family:'Liberation Sans',sans-serif;font-size:10.8px;line-height:10.8px;font-weight:normal;color:#14233a;white-space:nowrap;left:-83.80px;width:600px;text-align:right;">0</div><div style="position:absolute;top:187.66px;font-family:'Liberation Sans',sans-serif;font-size:10.8px;line-height:10.8px;font-weight:normal;color:#14233a;white-space:nowrap;left:-13.80px;width:600px;text-align:right;">1,056</div><div style="position:absolute;top:187.66px;font-family:'Liberation Sans',sans-serif;font-size:10.8px;line-height:10.8px;font-weight:normal;color:#14233a;white-space:nowrap;left:60.20px;width:600px;text-align:right;">7,977</div><div style="position:absolute;top:187.66px;font-family:'Liberation Sans',sans-serif;font-size:10.8px;line-height:10.8px;font-weight:normal;color:#14233a;white-space:nowrap;left:134.20px;width:600px;text-align:right;">0</div><div style="position:absolute;top:187.66px;font-family:'Liberation Sans',sans-serif;font-size:10.8px;line-height:10.8px;font-weight:normal;color:#14233a;white-space:nowrap;left:208.20px;width:600px;text-align:right;">0</div><div style="position:absolute;top:187.66px;font-family:'Liberation Sans',sans-serif;font-size:10.8px;line-height:10.8px;font-weight:normal;color:#14233a;white-space:nowrap;left:282.20px;width:600px;text-align:right;">0</div><div style="position:absolute;top:187.66px;font-family:'Liberation Sans',sans-serif;font-size:10.8px;line-height:10.8px;font-weight:normal;color:#14233a;white-space:nowrap;left:356.20px;width:600px;text-align:right;">0</div><div style="position:absolute;top:187.66px;font-family:'Liberation Sans',sans-serif;font-size:10.8px;line-height:10.8px;font-weight:normal;color:#14233a;white-space:nowrap;left:430.20px;width:600px;text-align:right;">0</div><div style="position:absolute;top:187.66px;font-family:'Liberation Sans',sans-serif;font-size:10.8px;line-height:10.8px;font-weight:normal;color:#14233a;white-space:nowrap;left:504.20px;width:600px;text-align:right;">0</div><div style="position:absolute;top:187.66px;font-family:'Liberation Sans',sans-serif;font-size:10.8px;line-height:10.8px;font-weight:normal;color:#14233a;white-space:nowrap;left:578.20px;width:600px;text-align:right;">0</div><div style="position:absolute;top:187.66px;font-family:'Liberation Sans',sans-serif;font-size:10.8px;line-height:10.8px;font-weight:normal;color:#14233a;white-space:nowrap;left:652.20px;width:600px;text-align:right;">0</div><div style="position:absolute;top:205.92px;font-family:'Liberation Sans',sans-serif;font-size:12.5px;line-height:12.5px;font-weight:normal;color:#233a5a;white-space:nowrap;letter-spacing:0.486px;left:57.30px;">Inventory</div><div style="position:absolute;top:206.66px;font-family:'Liberation Sans',sans-serif;font-size:10.8px;line-height:10.8px;font-weight:normal;color:#14233a;white-space:nowrap;left:-223.80px;width:600px;text-align:right;">2,200</div><div style="position:absolute;top:206.66px;font-family:'Liberation Sans',sans-serif;font-size:10.8px;line-height:10.8px;font-weight:normal;color:#14233a;white-space:nowrap;left:-153.80px;width:600px;text-align:right;">5,473</div><div style="position:absolute;top:206.66px;font-family:'Liberation Sans',sans-serif;font-size:10.8px;line-height:10.8px;font-weight:normal;color:#14233a;white-space:nowrap;left:-83.80px;width:600px;text-align:right;">8,753</div><div style="position:absolute;top:206.66px;font-family:'Liberation Sans',sans-serif;font-size:10.8px;line-height:10.8px;font-weight:normal;color:#14233a;white-space:nowrap;left:-13.80px;width:600px;text-align:right;">10,955</div><div style="position:absolute;top:206.66px;font-family:'Liberation Sans',sans-serif;font-size:10.8px;line-height:10.8px;font-weight:normal;color:#14233a;white-space:nowrap;left:60.20px;width:600px;text-align:right;">13,164</div><div style="position:absolute;top:206.66px;font-family:'Liberation Sans',sans-serif;font-size:10.8px;line-height:10.8px;font-weight:normal;color:#14233a;white-space:nowrap;left:134.20px;width:600px;text-align:right;">16,571</div><div style="position:absolute;top:206.66px;font-family:'Liberation Sans',sans-serif;font-size:10.8px;line-height:10.8px;font-weight:normal;color:#14233a;white-space:nowrap;left:208.20px;width:600px;text-align:right;">19,998</div><div style="position:absolute;top:206.66px;font-family:'Liberation Sans',sans-serif;font-size:10.8px;line-height:10.8px;font-weight:normal;color:#14233a;white-space:nowrap;left:282.20px;width:600px;text-align:right;">23,433</div><div style="position:absolute;top:206.66px;font-family:'Liberation Sans',sans-serif;font-size:10.8px;line-height:10.8px;font-weight:normal;color:#14233a;white-space:nowrap;left:356.20px;width:600px;text-align:right;">26,946</div><div style="position:absolute;top:206.66px;font-family:'Liberation Sans',sans-serif;font-size:10.8px;line-height:10.8px;font-weight:normal;color:#14233a;white-space:nowrap;left:430.20px;width:600px;text-align:right;">30,473</div><div style="position:absolute;top:206.66px;font-family:'Liberation Sans',sans-serif;font-size:10.8px;line-height:10.8px;font-weight:normal;color:#14233a;white-space:nowrap;left:504.20px;width:600px;text-align:right;">34,000</div><div style="position:absolute;top:206.66px;font-family:'Liberation Sans',sans-serif;font-size:10.8px;line-height:10.8px;font-weight:normal;color:#14233a;white-space:nowrap;left:578.20px;width:600px;text-align:right;">37,492</div><div style="position:absolute;top:206.66px;font-family:'Liberation Sans',sans-serif;font-size:10.8px;line-height:10.8px;font-weight:normal;color:#14233a;white-space:nowrap;left:652.20px;width:600px;text-align:right;">41,156</div><div style="position:absolute;top:224.02px;font-family:'Liberation Sans',sans-serif;font-size:12.5px;line-height:12.5px;font-weight:bold;color:#233a5a;white-space:nowrap;letter-spacing:-0.464px;left:57.30px;">Total current assets</div><div style="position:absolute;top:224.16px;font-family:'Liberation Sans',sans-serif;font-size:10.8px;line-height:10.8px;font-weight:bold;color:#14233a;white-space:nowrap;left:-223.80px;width:600px;text-align:right;">114,100</div><div style="position:absolute;top:224.16px;font-family:'Liberation Sans',sans-serif;font-size:10.8px;line-height:10.8px;font-weight:bold;color:#14233a;white-space:nowrap;left:-153.80px;width:600px;text-align:right;">167,491</div><div style="position:absolute;top:224.16px;font-family:'Liberation Sans',sans-serif;font-size:10.8px;line-height:10.8px;font-weight:bold;color:#14233a;white-space:nowrap;left:-83.80px;width:600px;text-align:right;">189,547</div><div style="position:absolute;top:224.16px;font-family:'Liberation Sans',sans-serif;font-size:10.8px;line-height:10.8px;font-weight:bold;color:#14233a;white-space:nowrap;left:-13.80px;width:600px;text-align:right;">189,896</div><div style="position:absolute;top:224.16px;font-family:'Liberation Sans',sans-serif;font-size:10.8px;line-height:10.8px;font-weight:bold;color:#14233a;white-space:nowrap;left:60.20px;width:600px;text-align:right;">111,996</div><div style="position:absolute;top:224.16px;font-family:'Liberation Sans',sans-serif;font-size:10.8px;line-height:10.8px;font-weight:bold;color:#14233a;white-space:nowrap;left:134.20px;width:600px;text-align:right;">183,945</div><div style="position:absolute;top:224.16px;font-family:'Liberation Sans',sans-serif;font-size:10.8px;line-height:10.8px;font-weight:bold;color:#14233a;white-space:nowrap;left:208.20px;width:600px;text-align:right;">172,229</div><div style="position:absolute;top:224.16px;font-family:'Liberation Sans',sans-serif;font-size:10.8px;line-height:10.8px;font-weight:bold;color:#14233a;white-space:nowrap;left:282.20px;width:600px;text-align:right;">206,283</div><div style="position:absolute;top:224.16px;font-family:'Liberation Sans',sans-serif;font-size:10.8px;line-height:10.8px;font-weight:bold;color:#14233a;white-space:nowrap;left:356.20px;width:600px;text-align:right;">250,426</div><div style="position:absolute;top:224.16px;font-family:'Liberation Sans',sans-serif;font-size:10.8px;line-height:10.8px;font-weight:bold;color:#14233a;white-space:nowrap;left:430.20px;width:600px;text-align:right;">288,306</div><div style="position:absolute;top:224.16px;font-family:'Liberation Sans',sans-serif;font-size:10.8px;line-height:10.8px;font-weight:bold;color:#14233a;white-space:nowrap;left:504.20px;width:600px;text-align:right;">331,762</div><div style="position:absolute;top:224.16px;font-family:'Liberation Sans',sans-serif;font-size:10.8px;line-height:10.8px;font-weight:bold;color:#14233a;white-space:nowrap;left:578.20px;width:600px;text-align:right;">372,224</div><div style="position:absolute;top:224.16px;font-family:'Liberation Sans',sans-serif;font-size:10.8px;line-height:10.8px;font-weight:bold;color:#14233a;white-space:nowrap;left:652.20px;width:600px;text-align:right;">419,513</div><div style="position:absolute;top:241.32px;font-family:'Liberation Sans',sans-serif;font-size:12.5px;line-height:12.5px;font-weight:normal;color:#233a5a;white-space:nowrap;letter-spacing:0.423px;left:57.30px;">Long-term financial investments</div><div style="position:absolute;top:242.06px;font-family:'Liberation Sans',sans-serif;font-size:10.8px;line-height:10.8px;font-weight:normal;color:#4a7fd6;white-space:nowrap;left:-223.80px;width:600px;text-align:right;">15,000</div><div style="position:absolute;top:242.06px;font-family:'Liberation Sans',sans-serif;font-size:10.8px;line-height:10.8px;font-weight:normal;color:#4a7fd6;white-space:nowrap;left:-153.80px;width:600px;text-align:right;">15,000</div><div style="position:absolute;top:242.06px;font-family:'Liberation Sans',sans-serif;font-size:10.8px;line-height:10.8px;font-weight:normal;color:#4a7fd6;white-space:nowrap;left:-83.80px;width:600px;text-align:right;">15,000</div><div style="position:absolute;top:242.06px;font-family:'Liberation Sans',sans-serif;font-size:10.8px;line-height:10.8px;font-weight:normal;color:#4a7fd6;white-space:nowrap;left:-13.80px;width:600px;text-align:right;">15,000</div><div style="position:absolute;top:242.06px;font-family:'Liberation Sans',sans-serif;font-size:10.8px;line-height:10.8px;font-weight:normal;color:#4a7fd6;white-space:nowrap;left:60.20px;width:600px;text-align:right;">15,000</div><div style="position:absolute;top:242.06px;font-family:'Liberation Sans',sans-serif;font-size:10.8px;line-height:10.8px;font-weight:normal;color:#4a7fd6;white-space:nowrap;left:134.20px;width:600px;text-align:right;">15,000</div><div style="position:absolute;top:242.06px;font-family:'Liberation Sans',sans-serif;font-size:10.8px;line-height:10.8px;font-weight:normal;color:#4a7fd6;white-space:nowrap;left:208.20px;width:600px;text-align:right;">15,000</div><div style="position:absolute;top:242.06px;font-family:'Liberation Sans',sans-serif;font-size:10.8px;line-height:10.8px;font-weight:normal;color:#4a7fd6;white-space:nowrap;left:282.20px;width:600px;text-align:right;">15,000</div><div style="position:absolute;top:242.06px;font-family:'Liberation Sans',sans-serif;font-size:10.8px;line-height:10.8px;font-weight:normal;color:#4a7fd6;white-space:nowrap;left:356.20px;width:600px;text-align:right;">15,000</div><div style="position:absolute;top:242.06px;font-family:'Liberation Sans',sans-serif;font-size:10.8px;line-height:10.8px;font-weight:normal;color:#4a7fd6;white-space:nowrap;left:430.20px;width:600px;text-align:right;">15,000</div><div style="position:absolute;top:242.06px;font-family:'Liberation Sans',sans-serif;font-size:10.8px;line-height:10.8px;font-weight:normal;color:#4a7fd6;white-space:nowrap;left:504.20px;width:600px;text-align:right;">15,000</div><div style="position:absolute;top:242.06px;font-family:'Liberation Sans',sans-serif;font-size:10.8px;line-height:10.8px;font-weight:normal;color:#4a7fd6;white-space:nowrap;left:578.20px;width:600px;text-align:right;">15,000</div><div style="position:absolute;top:242.06px;font-family:'Liberation Sans',sans-serif;font-size:10.8px;line-height:10.8px;font-weight:normal;color:#4a7fd6;white-space:nowrap;left:652.20px;width:600px;text-align:right;">15,000</div><div style="position:absolute;top:260.02px;font-family:'Liberation Sans',sans-serif;font-size:12.5px;line-height:12.5px;font-weight:normal;color:#233a5a;white-space:nowrap;letter-spacing:0.169px;left:57.30px;">Tangible assets</div><div style="position:absolute;top:260.76px;font-family:'Liberation Sans',sans-serif;font-size:10.8px;line-height:10.8px;font-weight:normal;color:#4a7fd6;white-space:nowrap;left:-223.80px;width:600px;text-align:right;">50,000</div><div style="position:absolute;top:260.76px;font-family:'Liberation Sans',sans-serif;font-size:10.8px;line-height:10.8px;font-weight:normal;color:#14233a;white-space:nowrap;left:-153.80px;width:600px;text-align:right;">59,825</div><div style="position:absolute;top:260.76px;font-family:'Liberation Sans',sans-serif;font-size:10.8px;line-height:10.8px;font-weight:normal;color:#14233a;white-space:nowrap;left:-83.80px;width:600px;text-align:right;">79,316</div><div style="position:absolute;top:260.76px;font-family:'Liberation Sans',sans-serif;font-size:10.8px;line-height:10.8px;font-weight:normal;color:#14233a;white-space:nowrap;left:-13.80px;width:600px;text-align:right;">78,808</div><div style="position:absolute;top:260.76px;font-family:'Liberation Sans',sans-serif;font-size:10.8px;line-height:10.8px;font-weight:normal;color:#14233a;white-space:nowrap;left:60.20px;width:600px;text-align:right;">175,521</div><div style="position:absolute;top:260.76px;font-family:'Liberation Sans',sans-serif;font-size:10.8px;line-height:10.8px;font-weight:normal;color:#14233a;white-space:nowrap;left:134.20px;width:600px;text-align:right;">172,235</div><div style="position:absolute;top:260.76px;font-family:'Liberation Sans',sans-serif;font-size:10.8px;line-height:10.8px;font-weight:normal;color:#14233a;white-space:nowrap;left:208.20px;width:600px;text-align:right;">217,907</div><div style="position:absolute;top:260.76px;font-family:'Liberation Sans',sans-serif;font-size:10.8px;line-height:10.8px;font-weight:normal;color:#14233a;white-space:nowrap;left:282.20px;width:600px;text-align:right;">213,579</div><div style="position:absolute;top:260.76px;font-family:'Liberation Sans',sans-serif;font-size:10.8px;line-height:10.8px;font-weight:normal;color:#14233a;white-space:nowrap;left:356.20px;width:600px;text-align:right;">209,251</div><div style="position:absolute;top:260.76px;font-family:'Liberation Sans',sans-serif;font-size:10.8px;line-height:10.8px;font-weight:normal;color:#14233a;white-space:nowrap;left:430.20px;width:600px;text-align:right;">204,923</div><div style="position:absolute;top:260.76px;font-family:'Liberation Sans',sans-serif;font-size:10.8px;line-height:10.8px;font-weight:normal;color:#14233a;white-space:nowrap;left:504.20px;width:600px;text-align:right;">200,595</div><div style="position:absolute;top:260.76px;font-family:'Liberation Sans',sans-serif;font-size:10.8px;line-height:10.8px;font-weight:normal;color:#14233a;white-space:nowrap;left:578.20px;width:600px;text-align:right;">196,267</div><div style="position:absolute;top:260.76px;font-family:'Liberation Sans',sans-serif;font-size:10.8px;line-height:10.8px;font-weight:normal;color:#14233a;white-space:nowrap;left:652.20px;width:600px;text-align:right;">191,939</div><div style="position:absolute;top:279.12px;font-family:'Liberation Sans',sans-serif;font-size:12.5px;line-height:12.5px;font-weight:normal;color:#233a5a;white-space:nowrap;letter-spacing:0.270px;left:57.30px;">Intangible assets</div><div style="position:absolute;top:279.86px;font-family:'Liberation Sans',sans-serif;font-size:10.8px;line-height:10.8px;font-weight:normal;color:#4a7fd6;white-space:nowrap;left:-223.80px;width:600px;text-align:right;">1,000</div><div style="position:absolute;top:279.86px;font-family:'Liberation Sans',sans-serif;font-size:10.8px;line-height:10.8px;font-weight:normal;color:#14233a;white-space:nowrap;left:-153.80px;width:600px;text-align:right;">980</div><div style="position:absolute;top:279.86px;font-family:'Liberation Sans',sans-serif;font-size:10.8px;line-height:10.8px;font-weight:normal;color:#14233a;white-space:nowrap;left:-83.80px;width:600px;text-align:right;">960</div><div style="position:absolute;top:279.86px;font-family:'Liberation Sans',sans-serif;font-size:10.8px;line-height:10.8px;font-weight:normal;color:#14233a;white-space:nowrap;left:-13.80px;width:600px;text-align:right;">940</div><div style="position:absolute;top:279.86px;font-family:'Liberation Sans',sans-serif;font-size:10.8px;line-height:10.8px;font-weight:normal;color:#14233a;white-space:nowrap;left:60.20px;width:600px;text-align:right;">920</div><div style="position:absolute;top:279.86px;font-family:'Liberation Sans',sans-serif;font-size:10.8px;line-height:10.8px;font-weight:normal;color:#14233a;white-space:nowrap;left:134.20px;width:600px;text-align:right;">900</div><div style="position:absolute;top:279.86px;font-family:'Liberation Sans',sans-serif;font-size:10.8px;line-height:10.8px;font-weight:normal;color:#14233a;white-space:nowrap;left:208.20px;width:600px;text-align:right;">880</div><div style="position:absolute;top:279.86px;font-family:'Liberation Sans',sans-serif;font-size:10.8px;line-height:10.8px;font-weight:normal;color:#14233a;white-space:nowrap;left:282.20px;width:600px;text-align:right;">860</div><div style="position:absolute;top:279.86px;font-family:'Liberation Sans',sans-serif;font-size:10.8px;line-height:10.8px;font-weight:normal;color:#14233a;white-space:nowrap;left:356.20px;width:600px;text-align:right;">840</div><div style="position:absolute;top:279.86px;font-family:'Liberation Sans',sans-serif;font-size:10.8px;line-height:10.8px;font-weight:normal;color:#14233a;white-space:nowrap;left:430.20px;width:600px;text-align:right;">820</div><div style="position:absolute;top:279.86px;font-family:'Liberation Sans',sans-serif;font-size:10.8px;line-height:10.8px;font-weight:normal;color:#14233a;white-space:nowrap;left:504.20px;width:600px;text-align:right;">800</div><div style="position:absolute;top:279.86px;font-family:'Liberation Sans',sans-serif;font-size:10.8px;line-height:10.8px;font-weight:normal;color:#14233a;white-space:nowrap;left:578.20px;width:600px;text-align:right;">780</div><div style="position:absolute;top:279.86px;font-family:'Liberation Sans',sans-serif;font-size:10.8px;line-height:10.8px;font-weight:normal;color:#14233a;white-space:nowrap;left:652.20px;width:600px;text-align:right;">760</div><div style="position:absolute;top:297.52px;font-family:'Liberation Sans',sans-serif;font-size:12.5px;line-height:12.5px;font-weight:bold;color:#233a5a;white-space:nowrap;letter-spacing:-0.416px;left:57.30px;">Total fixed assets</div><div style="position:absolute;top:297.66px;font-family:'Liberation Sans',sans-serif;font-size:10.8px;line-height:10.8px;font-weight:bold;color:#14233a;white-space:nowrap;left:-223.80px;width:600px;text-align:right;">66,000</div><div style="position:absolute;top:297.66px;font-family:'Liberation Sans',sans-serif;font-size:10.8px;line-height:10.8px;font-weight:bold;color:#14233a;white-space:nowrap;left:-153.80px;width:600px;text-align:right;">75,805</div><div style="position:absolute;top:297.66px;font-family:'Liberation Sans',sans-serif;font-size:10.8px;line-height:10.8px;font-weight:bold;color:#14233a;white-space:nowrap;left:-83.80px;width:600px;text-align:right;">95,276</div><div style="position:absolute;top:297.66px;font-family:'Liberation Sans',sans-serif;font-size:10.8px;line-height:10.8px;font-weight:bold;color:#14233a;white-space:nowrap;left:-13.80px;width:600px;text-align:right;">94,748</div><div style="position:absolute;top:297.66px;font-family:'Liberation Sans',sans-serif;font-size:10.8px;line-height:10.8px;font-weight:bold;color:#14233a;white-space:nowrap;left:60.20px;width:600px;text-align:right;">191,441</div><div style="position:absolute;top:297.66px;font-family:'Liberation Sans',sans-serif;font-size:10.8px;line-height:10.8px;font-weight:bold;color:#14233a;white-space:nowrap;left:134.20px;width:600px;text-align:right;">188,135</div><div style="position:absolute;top:297.66px;font-family:'Liberation Sans',sans-serif;font-size:10.8px;line-height:10.8px;font-weight:bold;color:#14233a;white-space:nowrap;left:208.20px;width:600px;text-align:right;">233,787</div><div style="position:absolute;top:297.66px;font-family:'Liberation Sans',sans-serif;font-size:10.8px;line-height:10.8px;font-weight:bold;color:#14233a;white-space:nowrap;left:282.20px;width:600px;text-align:right;">229,439</div><div style="position:absolute;top:297.66px;font-family:'Liberation Sans',sans-serif;font-size:10.8px;line-height:10.8px;font-weight:bold;color:#14233a;white-space:nowrap;left:356.20px;width:600px;text-align:right;">225,091</div><div style="position:absolute;top:297.66px;font-family:'Liberation Sans',sans-serif;font-size:10.8px;line-height:10.8px;font-weight:bold;color:#14233a;white-space:nowrap;left:430.20px;width:600px;text-align:right;">220,743</div><div style="position:absolute;top:297.66px;font-family:'Liberation Sans',sans-serif;font-size:10.8px;line-height:10.8px;font-weight:bold;color:#14233a;white-space:nowrap;left:504.20px;width:600px;text-align:right;">216,395</div><div style="position:absolute;top:297.66px;font-family:'Liberation Sans',sans-serif;font-size:10.8px;line-height:10.8px;font-weight:bold;color:#14233a;white-space:nowrap;left:578.20px;width:600px;text-align:right;">212,047</div><div style="position:absolute;top:297.66px;font-family:'Liberation Sans',sans-serif;font-size:10.8px;line-height:10.8px;font-weight:bold;color:#14233a;white-space:nowrap;left:652.20px;width:600px;text-align:right;">207,699</div><div style="position:absolute;top:312.82px;font-family:'Liberation Sans',sans-serif;font-size:12.5px;line-height:12.5px;font-weight:bold;color:#233a5a;white-space:nowrap;letter-spacing:-0.586px;left:57.30px;">Total assets</div><div style="position:absolute;top:312.96px;font-family:'Liberation Sans',sans-serif;font-size:10.8px;line-height:10.8px;font-weight:bold;color:#14233a;white-space:nowrap;left:-223.80px;width:600px;text-align:right;">180,100</div><div style="position:absolute;top:312.96px;font-family:'Liberation Sans',sans-serif;font-size:10.8px;line-height:10.8px;font-weight:bold;color:#14233a;white-space:nowrap;left:-153.80px;width:600px;text-align:right;">243,296</div><div style="position:absolute;top:312.96px;font-family:'Liberation Sans',sans-serif;font-size:10.8px;line-height:10.8px;font-weight:bold;color:#14233a;white-space:nowrap;left:-83.80px;width:600px;text-align:right;">284,823</div><div style="position:absolute;top:312.96px;font-family:'Liberation Sans',sans-serif;font-size:10.8px;line-height:10.8px;font-weight:bold;color:#14233a;white-space:nowrap;left:-13.80px;width:600px;text-align:right;">284,643</div><div style="position:absolute;top:312.96px;font-family:'Liberation Sans',sans-serif;font-size:10.8px;line-height:10.8px;font-weight:bold;color:#14233a;white-space:nowrap;left:60.20px;width:600px;text-align:right;">303,438</div><div style="position:absolute;top:312.96px;font-family:'Liberation Sans',sans-serif;font-size:10.8px;line-height:10.8px;font-weight:bold;color:#14233a;white-space:nowrap;left:134.20px;width:600px;text-align:right;">372,080</div><div style="position:absolute;top:312.96px;font-family:'Liberation Sans',sans-serif;font-size:10.8px;line-height:10.8px;font-weight:bold;color:#14233a;white-space:nowrap;left:208.20px;width:600px;text-align:right;">406,016</div><div style="position:absolute;top:312.96px;font-family:'Liberation Sans',sans-serif;font-size:10.8px;line-height:10.8px;font-weight:bold;color:#14233a;white-space:nowrap;left:282.20px;width:600px;text-align:right;">435,722</div><div style="position:absolute;top:312.96px;font-family:'Liberation Sans',sans-serif;font-size:10.8px;line-height:10.8px;font-weight:bold;color:#14233a;white-space:nowrap;left:356.20px;width:600px;text-align:right;">475,516</div><div style="position:absolute;top:312.96px;font-family:'Liberation Sans',sans-serif;font-size:10.8px;line-height:10.8px;font-weight:bold;color:#14233a;white-space:nowrap;left:430.20px;width:600px;text-align:right;">509,049</div><div style="position:absolute;top:312.96px;font-family:'Liberation Sans',sans-serif;font-size:10.8px;line-height:10.8px;font-weight:bold;color:#14233a;white-space:nowrap;left:504.20px;width:600px;text-align:right;">548,157</div><div style="position:absolute;top:312.96px;font-family:'Liberation Sans',sans-serif;font-size:10.8px;line-height:10.8px;font-weight:bold;color:#14233a;white-space:nowrap;left:578.20px;width:600px;text-align:right;">584,271</div><div style="position:absolute;top:312.96px;font-family:'Liberation Sans',sans-serif;font-size:10.8px;line-height:10.8px;font-weight:bold;color:#14233a;white-space:nowrap;left:652.20px;width:600px;text-align:right;">627,212</div><div style="position:absolute;top:359.12px;font-family:'Liberation Sans',sans-serif;font-size:12.5px;line-height:12.5px;font-weight:normal;color:#233a5a;white-space:nowrap;letter-spacing:0.576px;left:77.50px;">Accounts payable</div><div style="position:absolute;top:359.86px;font-family:'Liberation Sans',sans-serif;font-size:10.8px;line-height:10.8px;font-weight:normal;color:#14233a;white-space:nowrap;left:-223.80px;width:600px;text-align:right;">0</div><div style="position:absolute;top:359.86px;font-family:'Liberation Sans',sans-serif;font-size:10.8px;line-height:10.8px;font-weight:normal;color:#14233a;white-space:nowrap;left:-153.80px;width:600px;text-align:right;">55,097</div><div style="position:absolute;top:359.86px;font-family:'Liberation Sans',sans-serif;font-size:10.8px;line-height:10.8px;font-weight:normal;color:#14233a;white-space:nowrap;left:-83.80px;width:600px;text-align:right;">55,216</div><div style="position:absolute;top:359.86px;font-family:'Liberation Sans',sans-serif;font-size:10.8px;line-height:10.8px;font-weight:normal;color:#14233a;white-space:nowrap;left:-13.80px;width:600px;text-align:right;">37,066</div><div style="position:absolute;top:359.86px;font-family:'Liberation Sans',sans-serif;font-size:10.8px;line-height:10.8px;font-weight:normal;color:#14233a;white-space:nowrap;left:60.20px;width:600px;text-align:right;">37,185</div><div style="position:absolute;top:359.86px;font-family:'Liberation Sans',sans-serif;font-size:10.8px;line-height:10.8px;font-weight:normal;color:#14233a;white-space:nowrap;left:134.20px;width:600px;text-align:right;">57,342</div><div style="position:absolute;top:359.86px;font-family:'Liberation Sans',sans-serif;font-size:10.8px;line-height:10.8px;font-weight:normal;color:#14233a;white-space:nowrap;left:208.20px;width:600px;text-align:right;">57,700</div><div style="position:absolute;top:359.86px;font-family:'Liberation Sans',sans-serif;font-size:10.8px;line-height:10.8px;font-weight:normal;color:#14233a;white-space:nowrap;left:282.20px;width:600px;text-align:right;">57,819</div><div style="position:absolute;top:359.86px;font-family:'Liberation Sans',sans-serif;font-size:10.8px;line-height:10.8px;font-weight:normal;color:#14233a;white-space:nowrap;left:356.20px;width:600px;text-align:right;">59,136</div><div style="position:absolute;top:359.86px;font-family:'Liberation Sans',sans-serif;font-size:10.8px;line-height:10.8px;font-weight:normal;color:#14233a;white-space:nowrap;left:430.20px;width:600px;text-align:right;">59,374</div><div style="position:absolute;top:359.86px;font-family:'Liberation Sans',sans-serif;font-size:10.8px;line-height:10.8px;font-weight:normal;color:#14233a;white-space:nowrap;left:504.20px;width:600px;text-align:right;">59,374</div><div style="position:absolute;top:359.86px;font-family:'Liberation Sans',sans-serif;font-size:10.8px;line-height:10.8px;font-weight:normal;color:#14233a;white-space:nowrap;left:578.20px;width:600px;text-align:right;">58,779</div><div style="position:absolute;top:359.86px;font-family:'Liberation Sans',sans-serif;font-size:10.8px;line-height:10.8px;font-weight:normal;color:#14233a;white-space:nowrap;left:652.20px;width:600px;text-align:right;">61,665</div><div style="position:absolute;top:378.52px;font-family:'Liberation Sans',sans-serif;font-size:12.5px;line-height:12.5px;font-weight:normal;color:#233a5a;white-space:nowrap;letter-spacing:0.334px;left:77.50px;">Sales tax debt</div><div style="position:absolute;top:379.26px;font-family:'Liberation Sans',sans-serif;font-size:10.8px;line-height:10.8px;font-weight:normal;color:#4a7fd6;white-space:nowrap;left:-223.80px;width:600px;text-align:right;">100</div><div style="position:absolute;top:379.26px;font-family:'Liberation Sans',sans-serif;font-size:10.8px;line-height:10.8px;font-weight:normal;color:#14233a;white-space:nowrap;left:-153.80px;width:600px;text-align:right;">8,099</div><div style="position:absolute;top:379.26px;font-family:'Liberation Sans',sans-serif;font-size:10.8px;line-height:10.8px;font-weight:normal;color:#14233a;white-space:nowrap;left:-83.80px;width:600px;text-align:right;">7,462</div><div style="position:absolute;top:379.26px;font-family:'Liberation Sans',sans-serif;font-size:10.8px;line-height:10.8px;font-weight:normal;color:#14233a;white-space:nowrap;left:-13.80px;width:600px;text-align:right;">0</div><div style="position:absolute;top:379.26px;font-family:'Liberation Sans',sans-serif;font-size:10.8px;line-height:10.8px;font-weight:normal;color:#14233a;white-space:nowrap;left:60.20px;width:600px;text-align:right;">0</div><div style="position:absolute;top:379.26px;font-family:'Liberation Sans',sans-serif;font-size:10.8px;line-height:10.8px;font-weight:normal;color:#14233a;white-space:nowrap;left:134.20px;width:600px;text-align:right;">8,782</div><div style="position:absolute;top:379.26px;font-family:'Liberation Sans',sans-serif;font-size:10.8px;line-height:10.8px;font-weight:normal;color:#14233a;white-space:nowrap;left:208.20px;width:600px;text-align:right;">5,801</div><div style="position:absolute;top:379.26px;font-family:'Liberation Sans',sans-serif;font-size:10.8px;line-height:10.8px;font-weight:normal;color:#14233a;white-space:nowrap;left:282.20px;width:600px;text-align:right;">8,737</div><div style="position:absolute;top:379.26px;font-family:'Liberation Sans',sans-serif;font-size:10.8px;line-height:10.8px;font-weight:normal;color:#14233a;white-space:nowrap;left:356.20px;width:600px;text-align:right;">8,862</div><div style="position:absolute;top:379.26px;font-family:'Liberation Sans',sans-serif;font-size:10.8px;line-height:10.8px;font-weight:normal;color:#14233a;white-space:nowrap;left:430.20px;width:600px;text-align:right;">8,438</div><div style="position:absolute;top:379.26px;font-family:'Liberation Sans',sans-serif;font-size:10.8px;line-height:10.8px;font-weight:normal;color:#14233a;white-space:nowrap;left:504.20px;width:600px;text-align:right;">8,878</div><div style="position:absolute;top:379.26px;font-family:'Liberation Sans',sans-serif;font-size:10.8px;line-height:10.8px;font-weight:normal;color:#14233a;white-space:nowrap;left:578.20px;width:600px;text-align:right;">9,485</div><div style="position:absolute;top:379.26px;font-family:'Liberation Sans',sans-serif;font-size:10.8px;line-height:10.8px;font-weight:normal;color:#14233a;white-space:nowrap;left:652.20px;width:600px;text-align:right;">12,049</div><div style="position:absolute;top:397.42px;font-family:'Liberation Sans',sans-serif;font-size:12.5px;line-height:12.5px;font-weight:normal;color:#233a5a;white-space:nowrap;letter-spacing:0.385px;left:77.50px;">Other tax liabilities</div><div style="position:absolute;top:398.16px;font-family:'Liberation Sans',sans-serif;font-size:10.8px;line-height:10.8px;font-weight:normal;color:#4a7fd6;white-space:nowrap;left:-223.80px;width:600px;text-align:right;">50,000</div><div style="position:absolute;top:398.16px;font-family:'Liberation Sans',sans-serif;font-size:10.8px;line-height:10.8px;font-weight:normal;color:#4a7fd6;white-space:nowrap;left:-153.80px;width:600px;text-align:right;">0</div><div style="position:absolute;top:398.16px;font-family:'Liberation Sans',sans-serif;font-size:10.8px;line-height:10.8px;font-weight:normal;color:#4a7fd6;white-space:nowrap;left:-83.80px;width:600px;text-align:right;">0</div><div style="position:absolute;top:398.16px;font-family:'Liberation Sans',sans-serif;font-size:10.8px;line-height:10.8px;font-weight:normal;color:#4a7fd6;white-space:nowrap;left:-13.80px;width:600px;text-align:right;">0</div><div style="position:absolute;top:398.16px;font-family:'Liberation Sans',sans-serif;font-size:10.8px;line-height:10.8px;font-weight:normal;color:#4a7fd6;white-space:nowrap;left:60.20px;width:600px;text-align:right;">0</div><div style="position:absolute;top:398.16px;font-family:'Liberation Sans',sans-serif;font-size:10.8px;line-height:10.8px;font-weight:normal;color:#4a7fd6;white-space:nowrap;left:134.20px;width:600px;text-align:right;">0</div><div style="position:absolute;top:398.16px;font-family:'Liberation Sans',sans-serif;font-size:10.8px;line-height:10.8px;font-weight:normal;color:#4a7fd6;white-space:nowrap;left:208.20px;width:600px;text-align:right;">0</div><div style="position:absolute;top:398.16px;font-family:'Liberation Sans',sans-serif;font-size:10.8px;line-height:10.8px;font-weight:normal;color:#4a7fd6;white-space:nowrap;left:282.20px;width:600px;text-align:right;">0</div><div style="position:absolute;top:398.16px;font-family:'Liberation Sans',sans-serif;font-size:10.8px;line-height:10.8px;font-weight:normal;color:#4a7fd6;white-space:nowrap;left:356.20px;width:600px;text-align:right;">0</div><div style="position:absolute;top:398.16px;font-family:'Liberation Sans',sans-serif;font-size:10.8px;line-height:10.8px;font-weight:normal;color:#4a7fd6;white-space:nowrap;left:430.20px;width:600px;text-align:right;">0</div><div style="position:absolute;top:398.16px;font-family:'Liberation Sans',sans-serif;font-size:10.8px;line-height:10.8px;font-weight:normal;color:#4a7fd6;white-space:nowrap;left:504.20px;width:600px;text-align:right;">0</div><div style="position:absolute;top:398.16px;font-family:'Liberation Sans',sans-serif;font-size:10.8px;line-height:10.8px;font-weight:normal;color:#4a7fd6;white-space:nowrap;left:578.20px;width:600px;text-align:right;">0</div><div style="position:absolute;top:398.16px;font-family:'Liberation Sans',sans-serif;font-size:10.8px;line-height:10.8px;font-weight:normal;color:#4a7fd6;white-space:nowrap;left:652.20px;width:600px;text-align:right;">0</div><div style="position:absolute;top:416.42px;font-family:'Liberation Sans',sans-serif;font-size:12.5px;line-height:12.5px;font-weight:normal;color:#233a5a;white-space:nowrap;letter-spacing:0.337px;left:57.30px;">Current liabilities</div><div style="position:absolute;top:417.16px;font-family:'Liberation Sans',sans-serif;font-size:10.8px;line-height:10.8px;font-weight:normal;color:#14233a;white-space:nowrap;left:-223.80px;width:600px;text-align:right;">50,100</div><div style="position:absolute;top:417.16px;font-family:'Liberation Sans',sans-serif;font-size:10.8px;line-height:10.8px;font-weight:normal;color:#14233a;white-space:nowrap;left:-153.80px;width:600px;text-align:right;">63,196</div><div style="position:absolute;top:417.16px;font-family:'Liberation Sans',sans-serif;font-size:10.8px;line-height:10.8px;font-weight:normal;color:#14233a;white-space:nowrap;left:-83.80px;width:600px;text-align:right;">62,678</div><div style="position:absolute;top:417.16px;font-family:'Liberation Sans',sans-serif;font-size:10.8px;line-height:10.8px;font-weight:normal;color:#14233a;white-space:nowrap;left:-13.80px;width:600px;text-align:right;">37,066</div><div style="position:absolute;top:417.16px;font-family:'Liberation Sans',sans-serif;font-size:10.8px;line-height:10.8px;font-weight:normal;color:#14233a;white-space:nowrap;left:60.20px;width:600px;text-align:right;">37,185</div><div style="position:absolute;top:417.16px;font-family:'Liberation Sans',sans-serif;font-size:10.8px;line-height:10.8px;font-weight:normal;color:#14233a;white-space:nowrap;left:134.20px;width:600px;text-align:right;">66,124</div><div style="position:absolute;top:417.16px;font-family:'Liberation Sans',sans-serif;font-size:10.8px;line-height:10.8px;font-weight:normal;color:#14233a;white-space:nowrap;left:208.20px;width:600px;text-align:right;">63,501</div><div style="position:absolute;top:417.16px;font-family:'Liberation Sans',sans-serif;font-size:10.8px;line-height:10.8px;font-weight:normal;color:#14233a;white-space:nowrap;left:282.20px;width:600px;text-align:right;">66,555</div><div style="position:absolute;top:417.16px;font-family:'Liberation Sans',sans-serif;font-size:10.8px;line-height:10.8px;font-weight:normal;color:#14233a;white-space:nowrap;left:356.20px;width:600px;text-align:right;">67,997</div><div style="position:absolute;top:417.16px;font-family:'Liberation Sans',sans-serif;font-size:10.8px;line-height:10.8px;font-weight:normal;color:#14233a;white-space:nowrap;left:430.20px;width:600px;text-align:right;">67,812</div><div style="position:absolute;top:417.16px;font-family:'Liberation Sans',sans-serif;font-size:10.8px;line-height:10.8px;font-weight:normal;color:#14233a;white-space:nowrap;left:504.20px;width:600px;text-align:right;">68,252</div><div style="position:absolute;top:417.16px;font-family:'Liberation Sans',sans-serif;font-size:10.8px;line-height:10.8px;font-weight:normal;color:#14233a;white-space:nowrap;left:578.20px;width:600px;text-align:right;">68,264</div><div style="position:absolute;top:417.16px;font-family:'Liberation Sans',sans-serif;font-size:10.8px;line-height:10.8px;font-weight:normal;color:#14233a;white-space:nowrap;left:652.20px;width:600px;text-align:right;">73,715</div><div style="position:absolute;top:435.32px;font-family:'Liberation Sans',sans-serif;font-size:12.5px;line-height:12.5px;font-weight:normal;color:#233a5a;white-space:nowrap;letter-spacing:0.285px;left:77.50px;">Long-term loans</div><div style="position:absolute;top:436.06px;font-family:'Liberation Sans',sans-serif;font-size:10.8px;line-height:10.8px;font-weight:normal;color:#14233a;white-space:nowrap;left:-223.80px;width:600px;text-align:right;">0</div><div style="position:absolute;top:436.06px;font-family:'Liberation Sans',sans-serif;font-size:10.8px;line-height:10.8px;font-weight:normal;color:#14233a;white-space:nowrap;left:-153.80px;width:600px;text-align:right;">5,000</div><div style="position:absolute;top:436.06px;font-family:'Liberation Sans',sans-serif;font-size:10.8px;line-height:10.8px;font-weight:normal;color:#14233a;white-space:nowrap;left:-83.80px;width:600px;text-align:right;">5,000</div><div style="position:absolute;top:436.06px;font-family:'Liberation Sans',sans-serif;font-size:10.8px;line-height:10.8px;font-weight:normal;color:#14233a;white-space:nowrap;left:-13.80px;width:600px;text-align:right;">10,000</div><div style="position:absolute;top:436.06px;font-family:'Liberation Sans',sans-serif;font-size:10.8px;line-height:10.8px;font-weight:normal;color:#14233a;white-space:nowrap;left:60.20px;width:600px;text-align:right;">10,000</div><div style="position:absolute;top:436.06px;font-family:'Liberation Sans',sans-serif;font-size:10.8px;line-height:10.8px;font-weight:normal;color:#14233a;white-space:nowrap;left:134.20px;width:600px;text-align:right;">10,000</div><div style="position:absolute;top:436.06px;font-family:'Liberation Sans',sans-serif;font-size:10.8px;line-height:10.8px;font-weight:normal;color:#14233a;white-space:nowrap;left:208.20px;width:600px;text-align:right;">10,000</div><div style="position:absolute;top:436.06px;font-family:'Liberation Sans',sans-serif;font-size:10.8px;line-height:10.8px;font-weight:normal;color:#14233a;white-space:nowrap;left:282.20px;width:600px;text-align:right;">0</div><div style="position:absolute;top:436.06px;font-family:'Liberation Sans',sans-serif;font-size:10.8px;line-height:10.8px;font-weight:normal;color:#14233a;white-space:nowrap;left:356.20px;width:600px;text-align:right;">0</div><div style="position:absolute;top:436.06px;font-family:'Liberation Sans',sans-serif;font-size:10.8px;line-height:10.8px;font-weight:normal;color:#14233a;white-space:nowrap;left:430.20px;width:600px;text-align:right;">0</div><div style="position:absolute;top:436.06px;font-family:'Liberation Sans',sans-serif;font-size:10.8px;line-height:10.8px;font-weight:normal;color:#14233a;white-space:nowrap;left:504.20px;width:600px;text-align:right;">0</div><div style="position:absolute;top:436.06px;font-family:'Liberation Sans',sans-serif;font-size:10.8px;line-height:10.8px;font-weight:normal;color:#14233a;white-space:nowrap;left:578.20px;width:600px;text-align:right;">0</div><div style="position:absolute;top:436.06px;font-family:'Liberation Sans',sans-serif;font-size:10.8px;line-height:10.8px;font-weight:normal;color:#14233a;white-space:nowrap;left:652.20px;width:600px;text-align:right;">0</div><div style="position:absolute;top:454.42px;font-family:'Liberation Sans',sans-serif;font-size:12.5px;line-height:12.5px;font-weight:normal;color:#233a5a;white-space:nowrap;letter-spacing:0.285px;left:77.50px;">Long-term leasing</div><div style="position:absolute;top:455.16px;font-family:'Liberation Sans',sans-serif;font-size:10.8px;line-height:10.8px;font-weight:normal;color:#14233a;white-space:nowrap;left:-223.80px;width:600px;text-align:right;">0</div><div style="position:absolute;top:455.16px;font-family:'Liberation Sans',sans-serif;font-size:10.8px;line-height:10.8px;font-weight:normal;color:#14233a;white-space:nowrap;left:-153.80px;width:600px;text-align:right;">0</div><div style="position:absolute;top:455.16px;font-family:'Liberation Sans',sans-serif;font-size:10.8px;line-height:10.8px;font-weight:normal;color:#14233a;white-space:nowrap;left:-83.80px;width:600px;text-align:right;">0</div><div style="position:absolute;top:455.16px;font-family:'Liberation Sans',sans-serif;font-size:10.8px;line-height:10.8px;font-weight:normal;color:#14233a;white-space:nowrap;left:-13.80px;width:600px;text-align:right;">0</div><div style="position:absolute;top:455.16px;font-family:'Liberation Sans',sans-serif;font-size:10.8px;line-height:10.8px;font-weight:normal;color:#14233a;white-space:nowrap;left:60.20px;width:600px;text-align:right;">0</div><div style="position:absolute;top:455.16px;font-family:'Liberation Sans',sans-serif;font-size:10.8px;line-height:10.8px;font-weight:normal;color:#14233a;white-space:nowrap;left:134.20px;width:600px;text-align:right;">0</div><div style="position:absolute;top:455.16px;font-family:'Liberation Sans',sans-serif;font-size:10.8px;line-height:10.8px;font-weight:normal;color:#14233a;white-space:nowrap;left:208.20px;width:600px;text-align:right;">0</div><div style="position:absolute;top:455.16px;font-family:'Liberation Sans',sans-serif;font-size:10.8px;line-height:10.8px;font-weight:normal;color:#14233a;white-space:nowrap;left:282.20px;width:600px;text-align:right;">0</div><div style="position:absolute;top:455.16px;font-family:'Liberation Sans',sans-serif;font-size:10.8px;line-height:10.8px;font-weight:normal;color:#14233a;white-space:nowrap;left:356.20px;width:600px;text-align:right;">0</div><div style="position:absolute;top:455.16px;font-family:'Liberation Sans',sans-serif;font-size:10.8px;line-height:10.8px;font-weight:normal;color:#14233a;white-space:nowrap;left:430.20px;width:600px;text-align:right;">0</div><div style="position:absolute;top:455.16px;font-family:'Liberation Sans',sans-serif;font-size:10.8px;line-height:10.8px;font-weight:normal;color:#14233a;white-space:nowrap;left:504.20px;width:600px;text-align:right;">0</div><div style="position:absolute;top:455.16px;font-family:'Liberation Sans',sans-serif;font-size:10.8px;line-height:10.8px;font-weight:normal;color:#14233a;white-space:nowrap;left:578.20px;width:600px;text-align:right;">0</div><div style="position:absolute;top:455.16px;font-family:'Liberation Sans',sans-serif;font-size:10.8px;line-height:10.8px;font-weight:normal;color:#14233a;white-space:nowrap;left:652.20px;width:600px;text-align:right;">0</div><div style="position:absolute;top:473.42px;font-family:'Liberation Sans',sans-serif;font-size:12.5px;line-height:12.5px;font-weight:normal;color:#233a5a;white-space:nowrap;letter-spacing:0.053px;left:77.50px;">Owners' loans</div><div style="position:absolute;top:474.16px;font-family:'Liberation Sans',sans-serif;font-size:10.8px;line-height:10.8px;font-weight:normal;color:#14233a;white-space:nowrap;left:-223.80px;width:600px;text-align:right;">0</div><div style="position:absolute;top:474.16px;font-family:'Liberation Sans',sans-serif;font-size:10.8px;line-height:10.8px;font-weight:normal;color:#14233a;white-space:nowrap;left:-153.80px;width:600px;text-align:right;">0</div><div style="position:absolute;top:474.16px;font-family:'Liberation Sans',sans-serif;font-size:10.8px;line-height:10.8px;font-weight:normal;color:#14233a;white-space:nowrap;left:-83.80px;width:600px;text-align:right;">0</div><div style="position:absolute;top:474.16px;font-family:'Liberation Sans',sans-serif;font-size:10.8px;line-height:10.8px;font-weight:normal;color:#14233a;white-space:nowrap;left:-13.80px;width:600px;text-align:right;">0</div><div style="position:absolute;top:474.16px;font-family:'Liberation Sans',sans-serif;font-size:10.8px;line-height:10.8px;font-weight:normal;color:#14233a;white-space:nowrap;left:60.20px;width:600px;text-align:right;">0</div><div style="position:absolute;top:474.16px;font-family:'Liberation Sans',sans-serif;font-size:10.8px;line-height:10.8px;font-weight:normal;color:#14233a;white-space:nowrap;left:134.20px;width:600px;text-align:right;">0</div><div style="position:absolute;top:474.16px;font-family:'Liberation Sans',sans-serif;font-size:10.8px;line-height:10.8px;font-weight:normal;color:#14233a;white-space:nowrap;left:208.20px;width:600px;text-align:right;">0</div><div style="position:absolute;top:474.16px;font-family:'Liberation Sans',sans-serif;font-size:10.8px;line-height:10.8px;font-weight:normal;color:#14233a;white-space:nowrap;left:282.20px;width:600px;text-align:right;">0</div><div style="position:absolute;top:474.16px;font-family:'Liberation Sans',sans-serif;font-size:10.8px;line-height:10.8px;font-weight:normal;color:#14233a;white-space:nowrap;left:356.20px;width:600px;text-align:right;">0</div><div style="position:absolute;top:474.16px;font-family:'Liberation Sans',sans-serif;font-size:10.8px;line-height:10.8px;font-weight:normal;color:#14233a;white-space:nowrap;left:430.20px;width:600px;text-align:right;">0</div><div style="position:absolute;top:474.16px;font-family:'Liberation Sans',sans-serif;font-size:10.8px;line-height:10.8px;font-weight:normal;color:#14233a;white-space:nowrap;left:504.20px;width:600px;text-align:right;">0</div><div style="position:absolute;top:474.16px;font-family:'Liberation Sans',sans-serif;font-size:10.8px;line-height:10.8px;font-weight:normal;color:#14233a;white-space:nowrap;left:578.20px;width:600px;text-align:right;">0</div><div style="position:absolute;top:474.16px;font-family:'Liberation Sans',sans-serif;font-size:10.8px;line-height:10.8px;font-weight:normal;color:#14233a;white-space:nowrap;left:652.20px;width:600px;text-align:right;">0</div><div style="position:absolute;top:492.32px;font-family:'Liberation Sans',sans-serif;font-size:12.5px;line-height:12.5px;font-weight:normal;color:#233a5a;white-space:nowrap;letter-spacing:0.382px;left:57.30px;">Long-term liabilities</div><div style="position:absolute;top:493.06px;font-family:'Liberation Sans',sans-serif;font-size:10.8px;line-height:10.8px;font-weight:normal;color:#14233a;white-space:nowrap;left:-223.80px;width:600px;text-align:right;">0</div><div style="position:absolute;top:493.06px;font-family:'Liberation Sans',sans-serif;font-size:10.8px;line-height:10.8px;font-weight:normal;color:#14233a;white-space:nowrap;left:-153.80px;width:600px;text-align:right;">5,000</div><div style="position:absolute;top:493.06px;font-family:'Liberation Sans',sans-serif;font-size:10.8px;line-height:10.8px;font-weight:normal;color:#14233a;white-space:nowrap;left:-83.80px;width:600px;text-align:right;">5,000</div><div style="position:absolute;top:493.06px;font-family:'Liberation Sans',sans-serif;font-size:10.8px;line-height:10.8px;font-weight:normal;color:#14233a;white-space:nowrap;left:-13.80px;width:600px;text-align:right;">10,000</div><div style="position:absolute;top:493.06px;font-family:'Liberation Sans',sans-serif;font-size:10.8px;line-height:10.8px;font-weight:normal;color:#14233a;white-space:nowrap;left:60.20px;width:600px;text-align:right;">10,000</div><div style="position:absolute;top:493.06px;font-family:'Liberation Sans',sans-serif;font-size:10.8px;line-height:10.8px;font-weight:normal;color:#14233a;white-space:nowrap;left:134.20px;width:600px;text-align:right;">10,000</div><div style="position:absolute;top:493.06px;font-family:'Liberation Sans',sans-serif;font-size:10.8px;line-height:10.8px;font-weight:normal;color:#14233a;white-space:nowrap;left:208.20px;width:600px;text-align:right;">10,000</div><div style="position:absolute;top:493.06px;font-family:'Liberation Sans',sans-serif;font-size:10.8px;line-height:10.8px;font-weight:normal;color:#14233a;white-space:nowrap;left:282.20px;width:600px;text-align:right;">0</div><div style="position:absolute;top:493.06px;font-family:'Liberation Sans',sans-serif;font-size:10.8px;line-height:10.8px;font-weight:normal;color:#14233a;white-space:nowrap;left:356.20px;width:600px;text-align:right;">0</div><div style="position:absolute;top:493.06px;font-family:'Liberation Sans',sans-serif;font-size:10.8px;line-height:10.8px;font-weight:normal;color:#14233a;white-space:nowrap;left:430.20px;width:600px;text-align:right;">0</div><div style="position:absolute;top:493.06px;font-family:'Liberation Sans',sans-serif;font-size:10.8px;line-height:10.8px;font-weight:normal;color:#14233a;white-space:nowrap;left:504.20px;width:600px;text-align:right;">0</div><div style="position:absolute;top:493.06px;font-family:'Liberation Sans',sans-serif;font-size:10.8px;line-height:10.8px;font-weight:normal;color:#14233a;white-space:nowrap;left:578.20px;width:600px;text-align:right;">0</div><div style="position:absolute;top:493.06px;font-family:'Liberation Sans',sans-serif;font-size:10.8px;line-height:10.8px;font-weight:normal;color:#14233a;white-space:nowrap;left:652.20px;width:600px;text-align:right;">0</div><div style="position:absolute;top:510.32px;font-family:'Liberation Sans',sans-serif;font-size:12.5px;line-height:12.5px;font-weight:bold;color:#233a5a;white-space:nowrap;letter-spacing:-0.318px;left:57.30px;">Total liabilities</div><div style="position:absolute;top:510.46px;font-family:'Liberation Sans',sans-serif;font-size:10.8px;line-height:10.8px;font-weight:bold;color:#14233a;white-space:nowrap;left:-223.80px;width:600px;text-align:right;">50,100</div><div style="position:absolute;top:510.46px;font-family:'Liberation Sans',sans-serif;font-size:10.8px;line-height:10.8px;font-weight:bold;color:#14233a;white-space:nowrap;left:-153.80px;width:600px;text-align:right;">68,196</div><div style="position:absolute;top:510.46px;font-family:'Liberation Sans',sans-serif;font-size:10.8px;line-height:10.8px;font-weight:bold;color:#14233a;white-space:nowrap;left:-83.80px;width:600px;text-align:right;">67,678</div><div style="position:absolute;top:510.46px;font-family:'Liberation Sans',sans-serif;font-size:10.8px;line-height:10.8px;font-weight:bold;color:#14233a;white-space:nowrap;left:-13.80px;width:600px;text-align:right;">47,066</div><div style="position:absolute;top:510.46px;font-family:'Liberation Sans',sans-serif;font-size:10.8px;line-height:10.8px;font-weight:bold;color:#14233a;white-space:nowrap;left:60.20px;width:600px;text-align:right;">47,185</div><div style="position:absolute;top:510.46px;font-family:'Liberation Sans',sans-serif;font-size:10.8px;line-height:10.8px;font-weight:bold;color:#14233a;white-space:nowrap;left:134.20px;width:600px;text-align:right;">76,124</div><div style="position:absolute;top:510.46px;font-family:'Liberation Sans',sans-serif;font-size:10.8px;line-height:10.8px;font-weight:bold;color:#14233a;white-space:nowrap;left:208.20px;width:600px;text-align:right;">73,501</div><div style="position:absolute;top:510.46px;font-family:'Liberation Sans',sans-serif;font-size:10.8px;line-height:10.8px;font-weight:bold;color:#14233a;white-space:nowrap;left:282.20px;width:600px;text-align:right;">66,555</div><div style="position:absolute;top:510.46px;font-family:'Liberation Sans',sans-serif;font-size:10.8px;line-height:10.8px;font-weight:bold;color:#14233a;white-space:nowrap;left:356.20px;width:600px;text-align:right;">67,997</div><div style="position:absolute;top:510.46px;font-family:'Liberation Sans',sans-serif;font-size:10.8px;line-height:10.8px;font-weight:bold;color:#14233a;white-space:nowrap;left:430.20px;width:600px;text-align:right;">67,812</div><div style="position:absolute;top:510.46px;font-family:'Liberation Sans',sans-serif;font-size:10.8px;line-height:10.8px;font-weight:bold;color:#14233a;white-space:nowrap;left:504.20px;width:600px;text-align:right;">68,252</div><div style="position:absolute;top:510.46px;font-family:'Liberation Sans',sans-serif;font-size:10.8px;line-height:10.8px;font-weight:bold;color:#14233a;white-space:nowrap;left:578.20px;width:600px;text-align:right;">68,264</div><div style="position:absolute;top:510.46px;font-family:'Liberation Sans',sans-serif;font-size:10.8px;line-height:10.8px;font-weight:bold;color:#14233a;white-space:nowrap;left:652.20px;width:600px;text-align:right;">73,715</div><div style="position:absolute;top:526.72px;font-family:'Liberation Sans',sans-serif;font-size:12.5px;line-height:12.5px;font-weight:bold;color:#233a5a;white-space:nowrap;letter-spacing:-0.732px;left:57.30px;">Provisions</div><div style="position:absolute;top:526.86px;font-family:'Liberation Sans',sans-serif;font-size:10.8px;line-height:10.8px;font-weight:bold;color:#4a7fd6;white-space:nowrap;left:-223.80px;width:600px;text-align:right;">0</div><div style="position:absolute;top:526.86px;font-family:'Liberation Sans',sans-serif;font-size:10.8px;line-height:10.8px;font-weight:bold;color:#4a7fd6;white-space:nowrap;left:-153.80px;width:600px;text-align:right;">0</div><div style="position:absolute;top:526.86px;font-family:'Liberation Sans',sans-serif;font-size:10.8px;line-height:10.8px;font-weight:bold;color:#4a7fd6;white-space:nowrap;left:-83.80px;width:600px;text-align:right;">0</div><div style="position:absolute;top:526.86px;font-family:'Liberation Sans',sans-serif;font-size:10.8px;line-height:10.8px;font-weight:bold;color:#4a7fd6;white-space:nowrap;left:-13.80px;width:600px;text-align:right;">0</div><div style="position:absolute;top:526.86px;font-family:'Liberation Sans',sans-serif;font-size:10.8px;line-height:10.8px;font-weight:bold;color:#4a7fd6;white-space:nowrap;left:60.20px;width:600px;text-align:right;">0</div><div style="position:absolute;top:526.86px;font-family:'Liberation Sans',sans-serif;font-size:10.8px;line-height:10.8px;font-weight:bold;color:#4a7fd6;white-space:nowrap;left:134.20px;width:600px;text-align:right;">0</div><div style="position:absolute;top:526.86px;font-family:'Liberation Sans',sans-serif;font-size:10.8px;line-height:10.8px;font-weight:bold;color:#4a7fd6;white-space:nowrap;left:208.20px;width:600px;text-align:right;">0</div><div style="position:absolute;top:526.86px;font-family:'Liberation Sans',sans-serif;font-size:10.8px;line-height:10.8px;font-weight:bold;color:#4a7fd6;white-space:nowrap;left:282.20px;width:600px;text-align:right;">0</div><div style="position:absolute;top:526.86px;font-family:'Liberation Sans',sans-serif;font-size:10.8px;line-height:10.8px;font-weight:bold;color:#4a7fd6;white-space:nowrap;left:356.20px;width:600px;text-align:right;">0</div><div style="position:absolute;top:526.86px;font-family:'Liberation Sans',sans-serif;font-size:10.8px;line-height:10.8px;font-weight:bold;color:#4a7fd6;white-space:nowrap;left:430.20px;width:600px;text-align:right;">0</div><div style="position:absolute;top:526.86px;font-family:'Liberation Sans',sans-serif;font-size:10.8px;line-height:10.8px;font-weight:bold;color:#4a7fd6;white-space:nowrap;left:504.20px;width:600px;text-align:right;">0</div><div style="position:absolute;top:526.86px;font-family:'Liberation Sans',sans-serif;font-size:10.8px;line-height:10.8px;font-weight:bold;color:#4a7fd6;white-space:nowrap;left:578.20px;width:600px;text-align:right;">0</div><div style="position:absolute;top:526.86px;font-family:'Liberation Sans',sans-serif;font-size:10.8px;line-height:10.8px;font-weight:bold;color:#4a7fd6;white-space:nowrap;left:652.20px;width:600px;text-align:right;">0</div><div style="position:absolute;top:543.42px;font-family:'Liberation Sans',sans-serif;font-size:12.5px;line-height:12.5px;font-weight:normal;color:#233a5a;white-space:nowrap;letter-spacing:0.365px;left:57.30px;">Share Capital</div><div style="position:absolute;top:544.16px;font-family:'Liberation Sans',sans-serif;font-size:10.8px;line-height:10.8px;font-weight:normal;color:#4a7fd6;white-space:nowrap;left:-223.80px;width:600px;text-align:right;">80,000</div><div style="position:absolute;top:544.16px;font-family:'Liberation Sans',sans-serif;font-size:10.8px;line-height:10.8px;font-weight:normal;color:#14233a;white-space:nowrap;left:-153.80px;width:600px;text-align:right;">80,000</div><div style="position:absolute;top:544.16px;font-family:'Liberation Sans',sans-serif;font-size:10.8px;line-height:10.8px;font-weight:normal;color:#14233a;white-space:nowrap;left:-83.80px;width:600px;text-align:right;">80,000</div><div style="position:absolute;top:544.16px;font-family:'Liberation Sans',sans-serif;font-size:10.8px;line-height:10.8px;font-weight:normal;color:#14233a;white-space:nowrap;left:-13.80px;width:600px;text-align:right;">80,000</div><div style="position:absolute;top:544.16px;font-family:'Liberation Sans',sans-serif;font-size:10.8px;line-height:10.8px;font-weight:normal;color:#14233a;white-space:nowrap;left:60.20px;width:600px;text-align:right;">80,000</div><div style="position:absolute;top:544.16px;font-family:'Liberation Sans',sans-serif;font-size:10.8px;line-height:10.8px;font-weight:normal;color:#14233a;white-space:nowrap;left:134.20px;width:600px;text-align:right;">80,000</div><div style="position:absolute;top:544.16px;font-family:'Liberation Sans',sans-serif;font-size:10.8px;line-height:10.8px;font-weight:normal;color:#14233a;white-space:nowrap;left:208.20px;width:600px;text-align:right;">80,000</div><div style="position:absolute;top:544.16px;font-family:'Liberation Sans',sans-serif;font-size:10.8px;line-height:10.8px;font-weight:normal;color:#14233a;white-space:nowrap;left:282.20px;width:600px;text-align:right;">80,000</div><div style="position:absolute;top:544.16px;font-family:'Liberation Sans',sans-serif;font-size:10.8px;line-height:10.8px;font-weight:normal;color:#14233a;white-space:nowrap;left:356.20px;width:600px;text-align:right;">80,000</div><div style="position:absolute;top:544.16px;font-family:'Liberation Sans',sans-serif;font-size:10.8px;line-height:10.8px;font-weight:normal;color:#14233a;white-space:nowrap;left:430.20px;width:600px;text-align:right;">80,000</div><div style="position:absolute;top:544.16px;font-family:'Liberation Sans',sans-serif;font-size:10.8px;line-height:10.8px;font-weight:normal;color:#14233a;white-space:nowrap;left:504.20px;width:600px;text-align:right;">80,000</div><div style="position:absolute;top:544.16px;font-family:'Liberation Sans',sans-serif;font-size:10.8px;line-height:10.8px;font-weight:normal;color:#14233a;white-space:nowrap;left:578.20px;width:600px;text-align:right;">80,000</div><div style="position:absolute;top:544.16px;font-family:'Liberation Sans',sans-serif;font-size:10.8px;line-height:10.8px;font-weight:normal;color:#14233a;white-space:nowrap;left:652.20px;width:600px;text-align:right;">80,000</div><div style="position:absolute;top:562.52px;font-family:'Liberation Sans',sans-serif;font-size:12.5px;line-height:12.5px;font-weight:normal;color:#233a5a;white-space:nowrap;letter-spacing:-0.037px;left:57.30px;">Reserves</div><div style="position:absolute;top:563.26px;font-family:'Liberation Sans',sans-serif;font-size:10.8px;line-height:10.8px;font-weight:normal;color:#4a7fd6;white-space:nowrap;left:-223.80px;width:600px;text-align:right;">50,000</div><div style="position:absolute;top:563.26px;font-family:'Liberation Sans',sans-serif;font-size:10.8px;line-height:10.8px;font-weight:normal;color:#4a7fd6;white-space:nowrap;left:-153.80px;width:600px;text-align:right;">50,000</div><div style="position:absolute;top:563.26px;font-family:'Liberation Sans',sans-serif;font-size:10.8px;line-height:10.8px;font-weight:normal;color:#4a7fd6;white-space:nowrap;left:-83.80px;width:600px;text-align:right;">50,000</div><div style="position:absolute;top:563.26px;font-family:'Liberation Sans',sans-serif;font-size:10.8px;line-height:10.8px;font-weight:normal;color:#4a7fd6;white-space:nowrap;left:-13.80px;width:600px;text-align:right;">50,000</div><div style="position:absolute;top:563.26px;font-family:'Liberation Sans',sans-serif;font-size:10.8px;line-height:10.8px;font-weight:normal;color:#4a7fd6;white-space:nowrap;left:60.20px;width:600px;text-align:right;">50,000</div><div style="position:absolute;top:563.26px;font-family:'Liberation Sans',sans-serif;font-size:10.8px;line-height:10.8px;font-weight:normal;color:#4a7fd6;white-space:nowrap;left:134.20px;width:600px;text-align:right;">50,000</div><div style="position:absolute;top:563.26px;font-family:'Liberation Sans',sans-serif;font-size:10.8px;line-height:10.8px;font-weight:normal;color:#4a7fd6;white-space:nowrap;left:208.20px;width:600px;text-align:right;">50,000</div><div style="position:absolute;top:563.26px;font-family:'Liberation Sans',sans-serif;font-size:10.8px;line-height:10.8px;font-weight:normal;color:#4a7fd6;white-space:nowrap;left:282.20px;width:600px;text-align:right;">50,000</div><div style="position:absolute;top:563.26px;font-family:'Liberation Sans',sans-serif;font-size:10.8px;line-height:10.8px;font-weight:normal;color:#4a7fd6;white-space:nowrap;left:356.20px;width:600px;text-align:right;">50,000</div><div style="position:absolute;top:563.26px;font-family:'Liberation Sans',sans-serif;font-size:10.8px;line-height:10.8px;font-weight:normal;color:#4a7fd6;white-space:nowrap;left:430.20px;width:600px;text-align:right;">50,000</div><div style="position:absolute;top:563.26px;font-family:'Liberation Sans',sans-serif;font-size:10.8px;line-height:10.8px;font-weight:normal;color:#4a7fd6;white-space:nowrap;left:504.20px;width:600px;text-align:right;">50,000</div><div style="position:absolute;top:563.26px;font-family:'Liberation Sans',sans-serif;font-size:10.8px;line-height:10.8px;font-weight:normal;color:#4a7fd6;white-space:nowrap;left:578.20px;width:600px;text-align:right;">50,000</div><div style="position:absolute;top:563.26px;font-family:'Liberation Sans',sans-serif;font-size:10.8px;line-height:10.8px;font-weight:normal;color:#4a7fd6;white-space:nowrap;left:652.20px;width:600px;text-align:right;">50,000</div><div style="position:absolute;top:581.32px;font-family:'Liberation Sans',sans-serif;font-size:12.5px;line-height:12.5px;font-weight:normal;color:#233a5a;white-space:nowrap;letter-spacing:0.169px;left:77.50px;">Retained Earnings from prevous years</div><div style="position:absolute;top:582.06px;font-family:'Liberation Sans',sans-serif;font-size:10.8px;line-height:10.8px;font-weight:normal;color:#4a7fd6;white-space:nowrap;left:-223.80px;width:600px;text-align:right;">0</div><div style="position:absolute;top:582.06px;font-family:'Liberation Sans',sans-serif;font-size:10.8px;line-height:10.8px;font-weight:normal;color:#14233a;white-space:nowrap;left:-153.80px;width:600px;text-align:right;">0</div><div style="position:absolute;top:582.06px;font-family:'Liberation Sans',sans-serif;font-size:10.8px;line-height:10.8px;font-weight:normal;color:#14233a;white-space:nowrap;left:-83.80px;width:600px;text-align:right;">0</div><div style="position:absolute;top:582.06px;font-family:'Liberation Sans',sans-serif;font-size:10.8px;line-height:10.8px;font-weight:normal;color:#14233a;white-space:nowrap;left:-13.80px;width:600px;text-align:right;">0</div><div style="position:absolute;top:582.06px;font-family:'Liberation Sans',sans-serif;font-size:10.8px;line-height:10.8px;font-weight:normal;color:#14233a;white-space:nowrap;left:60.20px;width:600px;text-align:right;">0</div><div style="position:absolute;top:582.06px;font-family:'Liberation Sans',sans-serif;font-size:10.8px;line-height:10.8px;font-weight:normal;color:#14233a;white-space:nowrap;left:134.20px;width:600px;text-align:right;">0</div><div style="position:absolute;top:582.06px;font-family:'Liberation Sans',sans-serif;font-size:10.8px;line-height:10.8px;font-weight:normal;color:#14233a;white-space:nowrap;left:208.20px;width:600px;text-align:right;">0</div><div style="position:absolute;top:582.06px;font-family:'Liberation Sans',sans-serif;font-size:10.8px;line-height:10.8px;font-weight:normal;color:#14233a;white-space:nowrap;left:282.20px;width:600px;text-align:right;">0</div><div style="position:absolute;top:582.06px;font-family:'Liberation Sans',sans-serif;font-size:10.8px;line-height:10.8px;font-weight:normal;color:#14233a;white-space:nowrap;left:356.20px;width:600px;text-align:right;">0</div><div style="position:absolute;top:582.06px;font-family:'Liberation Sans',sans-serif;font-size:10.8px;line-height:10.8px;font-weight:normal;color:#14233a;white-space:nowrap;left:430.20px;width:600px;text-align:right;">0</div><div style="position:absolute;top:582.06px;font-family:'Liberation Sans',sans-serif;font-size:10.8px;line-height:10.8px;font-weight:normal;color:#14233a;white-space:nowrap;left:504.20px;width:600px;text-align:right;">0</div><div style="position:absolute;top:582.06px;font-family:'Liberation Sans',sans-serif;font-size:10.8px;line-height:10.8px;font-weight:normal;color:#14233a;white-space:nowrap;left:578.20px;width:600px;text-align:right;">0</div><div style="position:absolute;top:582.06px;font-family:'Liberation Sans',sans-serif;font-size:10.8px;line-height:10.8px;font-weight:normal;color:#14233a;white-space:nowrap;left:652.20px;width:600px;text-align:right;">0</div><div style="position:absolute;top:600.42px;font-family:'Liberation Sans',sans-serif;font-size:12.5px;line-height:12.5px;font-weight:normal;color:#233a5a;white-space:nowrap;letter-spacing:0.252px;left:77.50px;">Current year's Net Income</div><div style="position:absolute;top:601.16px;font-family:'Liberation Sans',sans-serif;font-size:10.8px;line-height:10.8px;font-weight:normal;color:#4a7fd6;white-space:nowrap;left:-223.80px;width:600px;text-align:right;">0</div><div style="position:absolute;top:601.16px;font-family:'Liberation Sans',sans-serif;font-size:10.8px;line-height:10.8px;font-weight:normal;color:#14233a;white-space:nowrap;left:-153.80px;width:600px;text-align:right;">45,100</div><div style="position:absolute;top:601.16px;font-family:'Liberation Sans',sans-serif;font-size:10.8px;line-height:10.8px;font-weight:normal;color:#14233a;white-space:nowrap;left:-83.80px;width:600px;text-align:right;">87,145</div><div style="position:absolute;top:601.16px;font-family:'Liberation Sans',sans-serif;font-size:10.8px;line-height:10.8px;font-weight:normal;color:#14233a;white-space:nowrap;left:-13.80px;width:600px;text-align:right;">107,577</div><div style="position:absolute;top:601.16px;font-family:'Liberation Sans',sans-serif;font-size:10.8px;line-height:10.8px;font-weight:normal;color:#14233a;white-space:nowrap;left:60.20px;width:600px;text-align:right;">126,252</div><div style="position:absolute;top:601.16px;font-family:'Liberation Sans',sans-serif;font-size:10.8px;line-height:10.8px;font-weight:normal;color:#14233a;white-space:nowrap;left:134.20px;width:600px;text-align:right;">165,956</div><div style="position:absolute;top:601.16px;font-family:'Liberation Sans',sans-serif;font-size:10.8px;line-height:10.8px;font-weight:normal;color:#14233a;white-space:nowrap;left:208.20px;width:600px;text-align:right;">202,515</div><div style="position:absolute;top:601.16px;font-family:'Liberation Sans',sans-serif;font-size:10.8px;line-height:10.8px;font-weight:normal;color:#14233a;white-space:nowrap;left:282.20px;width:600px;text-align:right;">239,167</div><div style="position:absolute;top:601.16px;font-family:'Liberation Sans',sans-serif;font-size:10.8px;line-height:10.8px;font-weight:normal;color:#14233a;white-space:nowrap;left:356.20px;width:600px;text-align:right;">277,519</div><div style="position:absolute;top:601.16px;font-family:'Liberation Sans',sans-serif;font-size:10.8px;line-height:10.8px;font-weight:normal;color:#14233a;white-space:nowrap;left:430.20px;width:600px;text-align:right;">311,237</div><div style="position:absolute;top:601.16px;font-family:'Liberation Sans',sans-serif;font-size:10.8px;line-height:10.8px;font-weight:normal;color:#14233a;white-space:nowrap;left:504.20px;width:600px;text-align:right;">349,906</div><div style="position:absolute;top:601.16px;font-family:'Liberation Sans',sans-serif;font-size:10.8px;line-height:10.8px;font-weight:normal;color:#14233a;white-space:nowrap;left:578.20px;width:600px;text-align:right;">386,006</div><div style="position:absolute;top:601.16px;font-family:'Liberation Sans',sans-serif;font-size:10.8px;line-height:10.8px;font-weight:normal;color:#14233a;white-space:nowrap;left:652.20px;width:600px;text-align:right;">423,497</div><div style="position:absolute;top:619.62px;font-family:'Liberation Sans',sans-serif;font-size:12.5px;line-height:12.5px;font-weight:normal;color:#233a5a;white-space:nowrap;letter-spacing:0.284px;left:57.30px;">Retained earnings</div><div style="position:absolute;top:620.36px;font-family:'Liberation Sans',sans-serif;font-size:10.8px;line-height:10.8px;font-weight:normal;color:#14233a;white-space:nowrap;left:-223.80px;width:600px;text-align:right;">0</div><div style="position:absolute;top:620.36px;font-family:'Liberation Sans',sans-serif;font-size:10.8px;line-height:10.8px;font-weight:normal;color:#14233a;white-space:nowrap;left:-153.80px;width:600px;text-align:right;">45,100</div><div style="position:absolute;top:620.36px;font-family:'Liberation Sans',sans-serif;font-size:10.8px;line-height:10.8px;font-weight:normal;color:#14233a;white-space:nowrap;left:-83.80px;width:600px;text-align:right;">87,145</div><div style="position:absolute;top:620.36px;font-family:'Liberation Sans',sans-serif;font-size:10.8px;line-height:10.8px;font-weight:normal;color:#14233a;white-space:nowrap;left:-13.80px;width:600px;text-align:right;">107,577</div><div style="position:absolute;top:620.36px;font-family:'Liberation Sans',sans-serif;font-size:10.8px;line-height:10.8px;font-weight:normal;color:#14233a;white-space:nowrap;left:60.20px;width:600px;text-align:right;">126,252</div><div style="position:absolute;top:620.36px;font-family:'Liberation Sans',sans-serif;font-size:10.8px;line-height:10.8px;font-weight:normal;color:#14233a;white-space:nowrap;left:134.20px;width:600px;text-align:right;">165,956</div><div style="position:absolute;top:620.36px;font-family:'Liberation Sans',sans-serif;font-size:10.8px;line-height:10.8px;font-weight:normal;color:#14233a;white-space:nowrap;left:208.20px;width:600px;text-align:right;">202,515</div><div style="position:absolute;top:620.36px;font-family:'Liberation Sans',sans-serif;font-size:10.8px;line-height:10.8px;font-weight:normal;color:#14233a;white-space:nowrap;left:282.20px;width:600px;text-align:right;">239,167</div><div style="position:absolute;top:620.36px;font-family:'Liberation Sans',sans-serif;font-size:10.8px;line-height:10.8px;font-weight:normal;color:#14233a;white-space:nowrap;left:356.20px;width:600px;text-align:right;">277,519</div><div style="position:absolute;top:620.36px;font-family:'Liberation Sans',sans-serif;font-size:10.8px;line-height:10.8px;font-weight:normal;color:#14233a;white-space:nowrap;left:430.20px;width:600px;text-align:right;">311,237</div><div style="position:absolute;top:620.36px;font-family:'Liberation Sans',sans-serif;font-size:10.8px;line-height:10.8px;font-weight:normal;color:#14233a;white-space:nowrap;left:504.20px;width:600px;text-align:right;">349,906</div><div style="position:absolute;top:620.36px;font-family:'Liberation Sans',sans-serif;font-size:10.8px;line-height:10.8px;font-weight:normal;color:#14233a;white-space:nowrap;left:578.20px;width:600px;text-align:right;">386,006</div><div style="position:absolute;top:620.36px;font-family:'Liberation Sans',sans-serif;font-size:10.8px;line-height:10.8px;font-weight:normal;color:#14233a;white-space:nowrap;left:652.20px;width:600px;text-align:right;">423,497</div><div style="position:absolute;top:637.82px;font-family:'Liberation Sans',sans-serif;font-size:12.5px;line-height:12.5px;font-weight:bold;color:#233a5a;white-space:nowrap;letter-spacing:-0.227px;left:57.30px;">Total equity</div><div style="position:absolute;top:637.96px;font-family:'Liberation Sans',sans-serif;font-size:10.8px;line-height:10.8px;font-weight:bold;color:#14233a;white-space:nowrap;left:-223.80px;width:600px;text-align:right;">130,000</div><div style="position:absolute;top:637.96px;font-family:'Liberation Sans',sans-serif;font-size:10.8px;line-height:10.8px;font-weight:bold;color:#14233a;white-space:nowrap;left:-153.80px;width:600px;text-align:right;">175,100</div><div style="position:absolute;top:637.96px;font-family:'Liberation Sans',sans-serif;font-size:10.8px;line-height:10.8px;font-weight:bold;color:#14233a;white-space:nowrap;left:-83.80px;width:600px;text-align:right;">217,145</div><div style="position:absolute;top:637.96px;font-family:'Liberation Sans',sans-serif;font-size:10.8px;line-height:10.8px;font-weight:bold;color:#14233a;white-space:nowrap;left:-13.80px;width:600px;text-align:right;">237,577</div><div style="position:absolute;top:637.96px;font-family:'Liberation Sans',sans-serif;font-size:10.8px;line-height:10.8px;font-weight:bold;color:#14233a;white-space:nowrap;left:60.20px;width:600px;text-align:right;">256,252</div><div style="position:absolute;top:637.96px;font-family:'Liberation Sans',sans-serif;font-size:10.8px;line-height:10.8px;font-weight:bold;color:#14233a;white-space:nowrap;left:134.20px;width:600px;text-align:right;">295,956</div><div style="position:absolute;top:637.96px;font-family:'Liberation Sans',sans-serif;font-size:10.8px;line-height:10.8px;font-weight:bold;color:#14233a;white-space:nowrap;left:208.20px;width:600px;text-align:right;">332,515</div><div style="position:absolute;top:637.96px;font-family:'Liberation Sans',sans-serif;font-size:10.8px;line-height:10.8px;font-weight:bold;color:#14233a;white-space:nowrap;left:282.20px;width:600px;text-align:right;">369,167</div><div style="position:absolute;top:637.96px;font-family:'Liberation Sans',sans-serif;font-size:10.8px;line-height:10.8px;font-weight:bold;color:#14233a;white-space:nowrap;left:356.20px;width:600px;text-align:right;">407,519</div><div style="position:absolute;top:637.96px;font-family:'Liberation Sans',sans-serif;font-size:10.8px;line-height:10.8px;font-weight:bold;color:#14233a;white-space:nowrap;left:430.20px;width:600px;text-align:right;">441,237</div><div style="position:absolute;top:637.96px;font-family:'Liberation Sans',sans-serif;font-size:10.8px;line-height:10.8px;font-weight:bold;color:#14233a;white-space:nowrap;left:504.20px;width:600px;text-align:right;">479,906</div><div style="position:absolute;top:637.96px;font-family:'Liberation Sans',sans-serif;font-size:10.8px;line-height:10.8px;font-weight:bold;color:#14233a;white-space:nowrap;left:578.20px;width:600px;text-align:right;">516,006</div><div style="position:absolute;top:637.96px;font-family:'Liberation Sans',sans-serif;font-size:10.8px;line-height:10.8px;font-weight:bold;color:#14233a;white-space:nowrap;left:652.20px;width:600px;text-align:right;">553,497</div><div style="position:absolute;top:653.32px;font-family:'Liberation Sans',sans-serif;font-size:12.5px;line-height:12.5px;font-weight:bold;color:#233a5a;white-space:nowrap;letter-spacing:-0.228px;left:57.30px;">Total equity and liabilities</div><div style="position:absolute;top:653.46px;font-family:'Liberation Sans',sans-serif;font-size:10.8px;line-height:10.8px;font-weight:bold;color:#14233a;white-space:nowrap;left:-223.80px;width:600px;text-align:right;">180,100</div><div style="position:absolute;top:653.46px;font-family:'Liberation Sans',sans-serif;font-size:10.8px;line-height:10.8px;font-weight:bold;color:#14233a;white-space:nowrap;left:-153.80px;width:600px;text-align:right;">243,296</div><div style="position:absolute;top:653.46px;font-family:'Liberation Sans',sans-serif;font-size:10.8px;line-height:10.8px;font-weight:bold;color:#14233a;white-space:nowrap;left:-83.80px;width:600px;text-align:right;">284,823</div><div style="position:absolute;top:653.46px;font-family:'Liberation Sans',sans-serif;font-size:10.8px;line-height:10.8px;font-weight:bold;color:#14233a;white-space:nowrap;left:-13.80px;width:600px;text-align:right;">284,643</div><div style="position:absolute;top:653.46px;font-family:'Liberation Sans',sans-serif;font-size:10.8px;line-height:10.8px;font-weight:bold;color:#14233a;white-space:nowrap;left:60.20px;width:600px;text-align:right;">303,438</div><div style="position:absolute;top:653.46px;font-family:'Liberation Sans',sans-serif;font-size:10.8px;line-height:10.8px;font-weight:bold;color:#14233a;white-space:nowrap;left:134.20px;width:600px;text-align:right;">372,080</div><div style="position:absolute;top:653.46px;font-family:'Liberation Sans',sans-serif;font-size:10.8px;line-height:10.8px;font-weight:bold;color:#14233a;white-space:nowrap;left:208.20px;width:600px;text-align:right;">406,016</div><div style="position:absolute;top:653.46px;font-family:'Liberation Sans',sans-serif;font-size:10.8px;line-height:10.8px;font-weight:bold;color:#14233a;white-space:nowrap;left:282.20px;width:600px;text-align:right;">435,722</div><div style="position:absolute;top:653.46px;font-family:'Liberation Sans',sans-serif;font-size:10.8px;line-height:10.8px;font-weight:bold;color:#14233a;white-space:nowrap;left:356.20px;width:600px;text-align:right;">475,516</div><div style="position:absolute;top:653.46px;font-family:'Liberation Sans',sans-serif;font-size:10.8px;line-height:10.8px;font-weight:bold;color:#14233a;white-space:nowrap;left:430.20px;width:600px;text-align:right;">509,049</div><div style="position:absolute;top:653.46px;font-family:'Liberation Sans',sans-serif;font-size:10.8px;line-height:10.8px;font-weight:bold;color:#14233a;white-space:nowrap;left:504.20px;width:600px;text-align:right;">548,157</div><div style="position:absolute;top:653.46px;font-family:'Liberation Sans',sans-serif;font-size:10.8px;line-height:10.8px;font-weight:bold;color:#14233a;white-space:nowrap;left:578.20px;width:600px;text-align:right;">584,271</div><div style="position:absolute;top:653.46px;font-family:'Liberation Sans',sans-serif;font-size:10.8px;line-height:10.8px;font-weight:bold;color:#14233a;white-space:nowrap;left:652.20px;width:600px;text-align:right;">627,212</div><div style="position:absolute;top:707.37px;font-family:'Liberation Sans',sans-serif;font-size:12.5px;line-height:12.5px;font-weight:bold;color:#233a5a;white-space:nowrap;letter-spacing:-0.427px;left:57.30px;">Control</div><div style="position:absolute;top:724.87px;font-family:'Liberation Sans',sans-serif;font-size:12.5px;line-height:12.5px;font-weight:normal;color:#233a5a;white-space:nowrap;letter-spacing:0.249px;left:57.30px;">Are Assets and Liabilities equal?</div><div style="position:absolute;top:724.59px;font-family:'Liberation Sans',sans-serif;font-size:12px;line-height:12px;font-weight:normal;color:#233a5a;white-space:nowrap;transform:scaleX(0.86);left:39.00px;width:600px;text-align:center;">TRUE</div><div style="position:absolute;top:724.59px;font-family:'Liberation Sans',sans-serif;font-size:12px;line-height:12px;font-weight:normal;color:#233a5a;white-space:nowrap;transform:scaleX(0.86);left:113.50px;width:600px;text-align:center;">TRUE</div><div style="position:absolute;top:724.59px;font-family:'Liberation Sans',sans-serif;font-size:12px;line-height:12px;font-weight:normal;color:#233a5a;white-space:nowrap;transform:scaleX(0.86);left:183.50px;width:600px;text-align:center;">TRUE</div><div style="position:absolute;top:724.59px;font-family:'Liberation Sans',sans-serif;font-size:12px;line-height:12px;font-weight:normal;color:#233a5a;white-space:nowrap;transform:scaleX(0.86);left:253.50px;width:600px;text-align:center;">TRUE</div><div style="position:absolute;top:724.59px;font-family:'Liberation Sans',sans-serif;font-size:12px;line-height:12px;font-weight:normal;color:#233a5a;white-space:nowrap;transform:scaleX(0.86);left:325.50px;width:600px;text-align:center;">TRUE</div><div style="position:absolute;top:724.59px;font-family:'Liberation Sans',sans-serif;font-size:12px;line-height:12px;font-weight:normal;color:#233a5a;white-space:nowrap;transform:scaleX(0.86);left:399.50px;width:600px;text-align:center;">TRUE</div><div style="position:absolute;top:724.59px;font-family:'Liberation Sans',sans-serif;font-size:12px;line-height:12px;font-weight:normal;color:#233a5a;white-space:nowrap;transform:scaleX(0.86);left:473.50px;width:600px;text-align:center;">TRUE</div><div style="position:absolute;top:724.59px;font-family:'Liberation Sans',sans-serif;font-size:12px;line-height:12px;font-weight:normal;color:#233a5a;white-space:nowrap;transform:scaleX(0.86);left:547.50px;width:600px;text-align:center;">TRUE</div><div style="position:absolute;top:724.59px;font-family:'Liberation Sans',sans-serif;font-size:12px;line-height:12px;font-weight:normal;color:#233a5a;white-space:nowrap;transform:scaleX(0.86);left:621.50px;width:600px;text-align:center;">TRUE</div><div style="position:absolute;top:724.59px;font-family:'Liberation Sans',sans-serif;font-size:12px;line-height:12px;font-weight:normal;color:#233a5a;white-space:nowrap;transform:scaleX(0.86);left:695.50px;width:600px;text-align:center;">TRUE</div><div style="position:absolute;top:724.59px;font-family:'Liberation Sans',sans-serif;font-size:12px;line-height:12px;font-weight:normal;color:#233a5a;white-space:nowrap;transform:scaleX(0.86);left:769.50px;width:600px;text-align:center;">TRUE</div><div style="position:absolute;top:724.59px;font-family:'Liberation Sans',sans-serif;font-size:12px;line-height:12px;font-weight:normal;color:#233a5a;white-space:nowrap;transform:scaleX(0.86);left:843.50px;width:600px;text-align:center;">TRUE</div><div style="position:absolute;top:724.59px;font-family:'Liberation Sans',sans-serif;font-size:12px;line-height:12px;font-weight:normal;color:#233a5a;white-space:nowrap;transform:scaleX(0.86);left:917.50px;width:600px;text-align:center;">TRUE</div><div style="position:absolute;top:743.12px;font-family:'Liberation Sans',sans-serif;font-size:12.5px;line-height:12.5px;font-weight:normal;color:#233a5a;white-space:nowrap;letter-spacing:0.438px;left:57.30px;">What is the difference?</div><div style="position:absolute;top:743.86px;font-family:'Liberation Sans',sans-serif;font-size:10.8px;line-height:10.8px;font-weight:normal;color:#14233a;white-space:nowrap;left:-223.80px;width:600px;text-align:right;">0</div><div style="position:absolute;top:743.86px;font-family:'Liberation Sans',sans-serif;font-size:10.8px;line-height:10.8px;font-weight:normal;color:#14233a;white-space:nowrap;left:-153.80px;width:600px;text-align:right;">0</div><div style="position:absolute;top:743.86px;font-family:'Liberation Sans',sans-serif;font-size:10.8px;line-height:10.8px;font-weight:normal;color:#14233a;white-space:nowrap;left:-83.80px;width:600px;text-align:right;">0</div><div style="position:absolute;top:743.86px;font-family:'Liberation Sans',sans-serif;font-size:10.8px;line-height:10.8px;font-weight:normal;color:#14233a;white-space:nowrap;left:-13.80px;width:600px;text-align:right;">0</div><div style="position:absolute;top:743.86px;font-family:'Liberation Sans',sans-serif;font-size:10.8px;line-height:10.8px;font-weight:normal;color:#14233a;white-space:nowrap;left:60.20px;width:600px;text-align:right;">0</div><div style="position:absolute;top:743.86px;font-family:'Liberation Sans',sans-serif;font-size:10.8px;line-height:10.8px;font-weight:normal;color:#14233a;white-space:nowrap;left:134.20px;width:600px;text-align:right;">0</div><div style="position:absolute;top:743.86px;font-family:'Liberation Sans',sans-serif;font-size:10.8px;line-height:10.8px;font-weight:normal;color:#14233a;white-space:nowrap;left:208.20px;width:600px;text-align:right;">0</div><div style="position:absolute;top:743.86px;font-family:'Liberation Sans',sans-serif;font-size:10.8px;line-height:10.8px;font-weight:normal;color:#14233a;white-space:nowrap;left:282.20px;width:600px;text-align:right;">0</div><div style="position:absolute;top:743.86px;font-family:'Liberation Sans',sans-serif;font-size:10.8px;line-height:10.8px;font-weight:normal;color:#14233a;white-space:nowrap;left:356.20px;width:600px;text-align:right;">0</div><div style="position:absolute;top:743.86px;font-family:'Liberation Sans',sans-serif;font-size:10.8px;line-height:10.8px;font-weight:normal;color:#14233a;white-space:nowrap;left:430.20px;width:600px;text-align:right;">0</div><div style="position:absolute;top:743.86px;font-family:'Liberation Sans',sans-serif;font-size:10.8px;line-height:10.8px;font-weight:normal;color:#14233a;white-space:nowrap;left:504.20px;width:600px;text-align:right;">0</div><div style="position:absolute;top:743.86px;font-family:'Liberation Sans',sans-serif;font-size:10.8px;line-height:10.8px;font-weight:normal;color:#14233a;white-space:nowrap;left:578.20px;width:600px;text-align:right;">0</div><div style="position:absolute;top:743.86px;font-family:'Liberation Sans',sans-serif;font-size:10.8px;line-height:10.8px;font-weight:normal;color:#14233a;white-space:nowrap;left:652.20px;width:600px;text-align:right;">0</div><div style="position:absolute;top:762.37px;font-family:'Liberation Sans',sans-serif;font-size:12.5px;line-height:12.5px;font-weight:normal;color:#233a5a;white-space:nowrap;letter-spacing:0.420px;left:57.30px;">What is the monthly growth of the differe</div><div style="position:absolute;top:763.11px;font-family:'Liberation Sans',sans-serif;font-size:10.8px;line-height:10.8px;font-weight:normal;color:#14233a;white-space:nowrap;left:-223.80px;width:600px;text-align:right;">0</div><div style="position:absolute;top:763.11px;font-family:'Liberation Sans',sans-serif;font-size:10.8px;line-height:10.8px;font-weight:normal;color:#14233a;white-space:nowrap;left:-153.80px;width:600px;text-align:right;">0</div><div style="position:absolute;top:763.11px;font-family:'Liberation Sans',sans-serif;font-size:10.8px;line-height:10.8px;font-weight:normal;color:#14233a;white-space:nowrap;left:-83.80px;width:600px;text-align:right;">0</div><div style="position:absolute;top:763.11px;font-family:'Liberation Sans',sans-serif;font-size:10.8px;line-height:10.8px;font-weight:normal;color:#14233a;white-space:nowrap;left:-13.80px;width:600px;text-align:right;">0</div><div style="position:absolute;top:763.11px;font-family:'Liberation Sans',sans-serif;font-size:10.8px;line-height:10.8px;font-weight:normal;color:#14233a;white-space:nowrap;left:60.20px;width:600px;text-align:right;">0</div><div style="position:absolute;top:763.11px;font-family:'Liberation Sans',sans-serif;font-size:10.8px;line-height:10.8px;font-weight:normal;color:#14233a;white-space:nowrap;left:134.20px;width:600px;text-align:right;">0</div><div style="position:absolute;top:763.11px;font-family:'Liberation Sans',sans-serif;font-size:10.8px;line-height:10.8px;font-weight:normal;color:#14233a;white-space:nowrap;left:208.20px;width:600px;text-align:right;">0</div><div style="position:absolute;top:763.11px;font-family:'Liberation Sans',sans-serif;font-size:10.8px;line-height:10.8px;font-weight:normal;color:#14233a;white-space:nowrap;left:282.20px;width:600px;text-align:right;">0</div><div style="position:absolute;top:763.11px;font-family:'Liberation Sans',sans-serif;font-size:10.8px;line-height:10.8px;font-weight:normal;color:#14233a;white-space:nowrap;left:356.20px;width:600px;text-align:right;">0</div><div style="position:absolute;top:763.11px;font-family:'Liberation Sans',sans-serif;font-size:10.8px;line-height:10.8px;font-weight:normal;color:#14233a;white-space:nowrap;left:430.20px;width:600px;text-align:right;">0</div><div style="position:absolute;top:763.11px;font-family:'Liberation Sans',sans-serif;font-size:10.8px;line-height:10.8px;font-weight:normal;color:#14233a;white-space:nowrap;left:504.20px;width:600px;text-align:right;">0</div><div style="position:absolute;top:763.11px;font-family:'Liberation Sans',sans-serif;font-size:10.8px;line-height:10.8px;font-weight:normal;color:#14233a;white-space:nowrap;left:578.20px;width:600px;text-align:right;">0</div><div style="position:absolute;top:763.11px;font-family:'Liberation Sans',sans-serif;font-size:10.8px;line-height:10.8px;font-weight:normal;color:#14233a;white-space:nowrap;left:652.20px;width:600px;text-align:right;">0</div><div style="position:absolute;left:54px;top:354px;width:1201px;height:1px;background:#000"></div><div style="position:absolute;left:54px;top:235px;width:1201px;height:3px;background:#fff"></div><div style="position:absolute;left:54px;top:308px;width:1201px;height:3px;background:#fff"></div><div style="position:absolute;left:54px;top:324px;width:1201px;height:3px;background:#fff"></div><div style="position:absolute;left:377px;top:125px;width:3px;height:200.5px;background:#fff"></div><div style="position:absolute;left:54px;top:429px;width:1201px;height:3px;background:#fff"></div><div style="position:absolute;left:54px;top:505px;width:1201px;height:3px;background:#fff"></div><div style="position:absolute;left:54px;top:521px;width:1201px;height:3px;background:#fff"></div><div style="position:absolute;left:54px;top:537px;width:1201px;height:3px;background:#fff"></div><div style="position:absolute;left:54px;top:648px;width:1201px;height:3px;background:#fff"></div><div style="position:absolute;left:54px;top:664px;width:1201px;height:3px;background:#fff"></div><div style="position:absolute;left:377px;top:355px;width:3px;height:310.5px;background:#fff"></div><div style="position:absolute;left:54px;top:702px;width:1201px;height:3px;background:#fff"></div><div style="position:absolute;left:54px;top:718px;width:1201px;height:3px;background:#fff"></div><div style="position:absolute;left:54px;top:775px;width:1201px;height:3px;background:#fff"></div><div style="position:absolute;left:54px;top:236px;width:1201px;height:1px;background:#000"></div><div style="position:absolute;left:54px;top:309px;width:1201px;height:1px;background:#000"></div><div style="position:absolute;left:54px;top:325px;width:1201px;height:1px;background:#000"></div><div style="position:absolute;left:378px;top:125px;width:1px;height:200.5px;background:#000"></div><div style="position:absolute;left:54px;top:430px;width:1201px;height:1px;background:#000"></div><div style="position:absolute;left:54px;top:506px;width:1201px;height:1px;background:#000"></div><div style="position:absolute;left:54px;top:522px;width:1201px;height:1px;background:#000"></div><div style="position:absolute;left:54px;top:538px;width:1201px;height:1px;background:#000"></div><div style="position:absolute;left:54px;top:649px;width:1201px;height:1px;background:#000"></div><div style="position:absolute;left:54px;top:665px;width:1201px;height:1px;background:#000"></div><div style="position:absolute;left:378px;top:355px;width:1px;height:310.5px;background:#000"></div><div style="position:absolute;left:54px;top:703px;width:1201px;height:1px;background:#000"></div><div style="position:absolute;left:54px;top:719px;width:1201px;height:1px;background:#000"></div><div style="position:absolute;left:54px;top:776px;width:1201px;height:1px;background:#000"></div><div style="position:absolute;left:23px;top:125px;width:1876px;height:1px;background:#a6a6a6"></div><div style="position:absolute;left:299px;top:60px;width:1px;height:768px;background:#a6a6a6"></div><div style="position:absolute;left:1253px;top:143px;width:57px;height:22px;border:2px solid #1e7145;box-sizing:border-box"></div><div style="position:absolute;left:1306px;top:161px;width:5px;height:5px;background:#1e7145;border:1px solid #fff"></div><div style="position:absolute;left:1311px;top:60px;width:588px;height:768px;overflow:hidden" id="instr"><div style="position:absolute;left:0;top:75.26px;white-space:nowrap;font-size:16px;line-height:16px;color:#333333;letter-spacing:-0.787px"><span style="font-weight:bold;color:#365b9b">Instructions – BS</span></div><div style="position:absolute;left:0;top:98.02px;white-space:nowrap;font-size:12.5px;line-height:12.5px;color:#333333;letter-spacing:0.451px">This is the pro-forma balance sheet for your company (BS). This is one of the last 3 worksheets automatically</div><div style="position:absolute;left:0;top:115.92px;white-space:nowrap;font-size:12.5px;line-height:12.5px;color:#333333;letter-spacing:0.645px">made up of information contained in the other worksheets. By now you should have already filled in all the</div><div style="position:absolute;left:0;top:134.22px;white-space:nowrap;font-size:12.5px;line-height:12.5px;color:#333333;letter-spacing:0.482px">necessary data at the other worksheets. If not, please continue to the <span style="background:#b4c6e7;padding:2px 0 1px">Sales</span> budget for now.</div><div style="position:absolute;left:0;top:162.92px;white-space:nowrap;font-size:12.5px;line-height:12.5px;color:#333333;letter-spacing:-0.337px"><b>Editing</b></div><div style="position:absolute;left:0;top:180.02px;white-space:nowrap;font-size:12.5px;line-height:12.5px;color:#333333;letter-spacing:0.663px">If you have already filled in the data in all the other worksheets with your company’s numbers please follow</div><div style="position:absolute;left:0;top:197.92px;white-space:nowrap;font-size:12.5px;line-height:12.5px;color:#333333;letter-spacing:0.573px">the directions below.</div><div style="position:absolute;left:0;top:226.82px;white-space:nowrap;font-size:12.5px;line-height:12.5px;color:#333333;letter-spacing:0.595px">First, you need to fill in the Starting balance of your company – column C. Then fill in the data for the whole</div><div style="position:absolute;left:0;top:244.62px;white-space:nowrap;font-size:12.5px;line-height:12.5px;color:#333333;letter-spacing:0.714px">year for items that do not depend on other assumptions. Other items like inventory, accounts payable and</div><div style="position:absolute;left:0;top:262.92px;white-space:nowrap;font-size:12.5px;line-height:12.5px;color:#333333;letter-spacing:0.618px">receivable will be dependent on your sales, terms of payment and purchasing policies. They are calculated</div><div style="position:absolute;left:0;top:280.92px;white-space:nowrap;font-size:12.5px;line-height:12.5px;color:#333333;letter-spacing:0.551px">automatically from the data you entered in the other worksheets.</div><div style="position:absolute;left:0;top:310.12px;white-space:nowrap;font-size:12.5px;line-height:12.5px;color:#333333;letter-spacing:0.767px">If you are planning the budget, it is likely that the financial year under consideration has not ended yet.</div><div style="position:absolute;left:0;top:327.42px;white-space:nowrap;font-size:12.5px;line-height:12.5px;color:#333333;letter-spacing:0.918px">Therefore you need to forecast the balance sheet figures for the first day of the next financial year. The</div><div style="position:absolute;left:0;top:345.62px;white-space:nowrap;font-size:12.5px;line-height:12.5px;color:#333333;letter-spacing:1.032px">simplest approach would be to just take your latest actual financial statement and assume a steady state</div><div style="position:absolute;left:0;top:363.42px;white-space:nowrap;font-size:12.5px;line-height:12.5px;color:#333333;letter-spacing:0.448px">scenario. In that event you only need to copy the numbers into the <span style="background:#da9694;padding:2px 0 1px">BS</span> sheet.</div><div style="position:absolute;left:0;top:392.12px;white-space:nowrap;font-size:12.5px;line-height:12.5px;color:#333333;letter-spacing:-0.240px"><b>Filling in the numbers:</b></div><div style="position:absolute;left:0;top:427.12px;white-space:nowrap;font-size:12.5px;line-height:12.5px;color:#333333;letter-spacing:0.522px"><b>Cash:</b> All the numbers here will be derived automatically. Even the starting cash balance is calculated as the</div><div style="position:absolute;left:0;top:444.62px;white-space:nowrap;font-size:12.5px;line-height:12.5px;color:#333333;letter-spacing:0.416px">difference between all the other items; so the <span style="background:#da9694;padding:2px 0 1px">BS</span> balances itself.</div><div style="position:absolute;left:0;top:473.42px;white-space:nowrap;font-size:12.5px;line-height:12.5px;color:#333333;letter-spacing:0.845px"><b>Marketable securities:</b> please enter the amount of marketable securities (money market funds, publicly</div><div style="position:absolute;left:0;top:491.92px;white-space:nowrap;font-size:12.5px;line-height:12.5px;color:#333333;letter-spacing:0.566px">traded stock, short-term deposits, etc.) that you plan to hold at the end of each month.</div><div style="position:absolute;left:0;top:521.42px;white-space:nowrap;font-size:12.5px;line-height:12.5px;color:#333333;letter-spacing:0.768px"><b>Accounts receivable:</b> the numbers here are calculated automatically, based on the data in the Accounts</div><div style="position:absolute;left:0;top:539.42px;white-space:nowrap;font-size:12.5px;line-height:12.5px;color:#333333;letter-spacing:0.576px"><span style="background:#da9694;padding:2px 0 1px">Receivable</span> worksheet. If you want to change them, go to the <span style="background:#da9694;padding:2px 0 1px">Accounts Receivable</span> worksheet.</div><div style="position:absolute;left:0;top:567.72px;white-space:nowrap;font-size:12.5px;line-height:12.5px;color:#333333;letter-spacing:0.651px"><b>Sales tax overpayment:</b> if you plan to have a sales tax overpayment at the beginning of the year, enter the</div><div style="position:absolute;left:0;top:585.72px;white-space:nowrap;font-size:12.5px;line-height:12.5px;color:#333333;letter-spacing:0.503px">amount in cell C8, otherwise leave it as a 0. The other months are calculated automatically after you fill the</div><div style="position:absolute;left:0;top:603.12px;white-space:nowrap;font-size:12.5px;line-height:12.5px;color:#333333;letter-spacing:0.399px">data in all the worksheets.</div><div style="position:absolute;left:0;top:632.72px;white-space:nowrap;font-size:12.5px;line-height:12.5px;color:#333333;letter-spacing:0.630px"><b>Inventory:</b> the numbers here are automatically calculated from the data in the <span style="background:#da9694;padding:2px 0 1px">Purchases</span> worksheet. If you</div><div style="position:absolute;left:0;top:650.02px;white-space:nowrap;font-size:12.5px;line-height:12.5px;color:#333333;letter-spacing:0.555px">want to change them, go to the <span style="background:#da9694;padding:2px 0 1px">Purchases</span> worksheet.</div><div style="position:absolute;left:0;top:679.62px;white-space:nowrap;font-size:12.5px;line-height:12.5px;color:#333333;letter-spacing:0.749px"><b>Marketable securities:</b> please, enter the amount of long-term financial investments (e.g., shares in other</div><div style="position:absolute;left:0;top:697.02px;white-space:nowrap;font-size:12.5px;line-height:12.5px;color:#333333;letter-spacing:0.677px">companies) that you plan to hold at the end of each month.</div><div style="position:absolute;left:0;top:724.82px;white-space:nowrap;font-size:12.5px;line-height:12.5px;color:#333333;letter-spacing:0.643px"><b>Tangible assets</b>: please, enter the residual value of the company’s tangible assets at the beginning of the</div><div style="position:absolute;left:0;top:743.22px;white-space:nowrap;font-size:12.5px;line-height:12.5px;color:#333333;letter-spacing:0.533px">year in cell C12. The other months are automatically calculated from the data in the <span style="background:#da9694;padding:2px 0 1px">CapEx</span> worksheet. If you</div><div style="position:absolute;left:0;top:761.22px;white-space:nowrap;font-size:12.5px;line-height:12.5px;color:#333333;letter-spacing:0.446px">want to make changes, go to the <span style="background:#da9694;padding:2px 0 1px">CapEx</span> worksheet.</div></div><div style="position:absolute;left:1899px;top:59px;width:20px;height:769px;background:#262626"></div><div style="position:absolute;left:1903px;top:48px;width:13px;height:13px;background:#4a4a4a"></div><svg style="position:absolute;left:1905px;top:51px" width="9" height="6"><path d="M0 5 L4.5 0 L9 5z" fill="#9a9a9a"/></svg><div style="position:absolute;left:1903px;top:63px;width:13px;height:394px;background:#555"></div><div style="position:absolute;left:1903px;top:457px;width:13px;height:357px;background:#383838"></div><div style="position:absolute;left:1903px;top:814px;width:13px;height:13px;background:#4a4a4a"></div><svg style="position:absolute;left:1905px;top:818px" width="9" height="6"><path d="M0 0 L9 0 L4.5 5z" fill="#9a9a9a"/></svg><div style="position:absolute;left:0px;top:828px;width:1920px;height:28px;background:#262626"></div><div style="position:absolute;left:0px;top:828px;width:1899px;height:1px;background:#7a7a7a"></div><div style="position:absolute;left:0px;top:829px;width:1920px;height:1px;background:#1e1e1e"></div><div style="position:absolute;left:0px;top:853px;width:1920px;height:3px;background:#1f1f1f"></div><svg style="position:absolute;left:26px;top:836px" width="8" height="11"><path d="M7 0 L7 11 L1 5.5z" fill="#8a8a8a"/></svg><svg style="position:absolute;left:54px;top:836px" width="8" height="11"><path d="M1 0 L1 11 L7 5.5z" fill="#e8e8e8"/></svg><div style="position:absolute;left:100px;top:833px;width:1px;height:19px;background:#8a8a8a"></div><div style="position:absolute;left:103px;top:831px;width:92px;height:22px;background:#b1a0c7"></div><div style="position:absolute;top:836.02px;font-family:'Liberation Sans',sans-serif;font-size:12.5px;line-height:12.5px;font-weight:normal;color:#222;white-space:nowrap;left:-151.00px;width:600px;text-align:center;">Instructions</div><div style="position:absolute;left:197px;top:833px;width:1px;height:19px;background:#9a9a9a"></div><div style="position:absolute;left:200px;top:831px;width:99px;height:22px;background:#b1a0c7"></div><div style="position:absolute;top:836.02px;font-family:'Liberation Sans',sans-serif;font-size:12.5px;line-height:12.5px;font-weight:normal;color:#222;white-space:nowrap;left:-50.50px;width:600px;text-align:center;">Assumptions</div><div style="position:absolute;left:301px;top:833px;width:1px;height:19px;background:#9a9a9a"></div><div style="position:absolute;left:304px;top:831px;width:34px;height:22px;background:#95b3d7"></div><div style="position:absolute;top:836.02px;font-family:'Liberation Sans',sans-serif;font-size:12.5px;line-height:12.5px;font-weight:normal;color:#222;white-space:nowrap;left:21.00px;width:600px;text-align:center;">PL</div><div style="position:absolute;left:340px;top:828px;width:40px;height:23px;background:#fff"></div><div style="position:absolute;left:343px;top:832px;width:34px;height:18px;background:linear-gradient(#ffffff,#f0d0d0)"></div><div style="position:absolute;left:340px;top:851px;width:40px;height:2px;background:#1e7145"></div><div style="position:absolute;top:836.02px;font-family:'Liberation Sans',sans-serif;font-size:12.5px;line-height:12.5px;font-weight:bold;color:#1e7145;white-space:nowrap;left:60.00px;width:600px;text-align:center;">BS</div><div style="position:absolute;left:382px;top:831px;width:34px;height:22px;background:#c4d79b"></div><div style="position:absolute;top:836.02px;font-family:'Liberation Sans',sans-serif;font-size:12.5px;line-height:12.5px;font-weight:normal;color:#222;white-space:nowrap;left:99.00px;width:600px;text-align:center;">CF</div><div style="position:absolute;left:418px;top:833px;width:1px;height:19px;background:#9a9a9a"></div><div style="position:absolute;left:421px;top:831px;width:50px;height:22px;background:#95b3d7"></div><div style="position:absolute;top:836.02px;font-family:'Liberation Sans',sans-serif;font-size:12.5px;line-height:12.5px;font-weight:normal;color:#222;white-space:nowrap;left:146.00px;width:600px;text-align:center;">Sales</div><div style="position:absolute;left:473px;top:833px;width:1px;height:19px;background:#9a9a9a"></div><div style="position:absolute;left:476px;top:831px;width:106px;height:22px;background:#95b3d7"></div><div style="position:absolute;top:836.02px;font-family:'Liberation Sans',sans-serif;font-size:12.5px;line-height:12.5px;font-weight:normal;color:#222;white-space:nowrap;left:229.00px;width:600px;text-align:center;">Shop Network</div><div style="position:absolute;left:584px;top:833px;width:1px;height:19px;background:#9a9a9a"></div><div style="position:absolute;left:587px;top:831px;width:87px;height:22px;background:#95b3d7"></div><div style="position:absolute;top:836.02px;font-family:'Liberation Sans',sans-serif;font-size:12.5px;line-height:12.5px;font-weight:normal;color:#222;white-space:nowrap;left:330.50px;width:600px;text-align:center;">Sales Force</div><div style="position:absolute;left:676px;top:833px;width:1px;height:19px;background:#9a9a9a"></div><div style="position:absolute;left:679px;top:831px;width:37px;height:22px;background:#95b3d7"></div><div style="position:absolute;top:836.02px;font-family:'Liberation Sans',sans-serif;font-size:12.5px;line-height:12.5px;font-weight:normal;color:#222;white-space:nowrap;left:397.50px;width:600px;text-align:center;">HR</div><div style="position:absolute;left:718px;top:833px;width:1px;height:19px;background:#9a9a9a"></div><div style="position:absolute;left:721px;top:831px;width:82px;height:22px;background:#95b3d7"></div><div style="position:absolute;top:836.02px;font-family:'Liberation Sans',sans-serif;font-size:12.5px;line-height:12.5px;font-weight:normal;color:#222;white-space:nowrap;left:462.00px;width:600px;text-align:center;">Marketing</div><div style="position:absolute;left:805px;top:833px;width:1px;height:19px;background:#9a9a9a"></div><div style="position:absolute;left:808px;top:831px;width:92px;height:22px;background:#95b3d7"></div><div style="position:absolute;top:836.02px;font-family:'Liberation Sans',sans-serif;font-size:12.5px;line-height:12.5px;font-weight:normal;color:#222;white-space:nowrap;left:554.00px;width:600px;text-align:center;">Selling Cost</div><div style="position:absolute;left:902px;top:833px;width:1px;height:19px;background:#9a9a9a"></div><div style="position:absolute;left:905px;top:831px;width:111px;height:22px;background:#95b3d7"></div><div style="position:absolute;top:836.02px;font-family:'Liberation Sans',sans-serif;font-size:12.5px;line-height:12.5px;font-weight:normal;color:#222;white-space:nowrap;left:660.50px;width:600px;text-align:center;">Admin Salaries</div><div style="position:absolute;left:1018px;top:833px;width:1px;height:19px;background:#9a9a9a"></div><div style="position:absolute;left:1021px;top:831px;width:91px;height:22px;background:#95b3d7"></div><div style="position:absolute;top:836.02px;font-family:'Liberation Sans',sans-serif;font-size:12.5px;line-height:12.5px;font-weight:normal;color:#222;white-space:nowrap;left:766.50px;width:600px;text-align:center;">Admin Cost</div><div style="position:absolute;left:1114px;top:833px;width:1px;height:19px;background:#9a9a9a"></div><div style="position:absolute;left:1117px;top:831px;width:112px;height:22px;background:#95b3d7"></div><div style="position:absolute;top:836.02px;font-family:'Liberation Sans',sans-serif;font-size:12.5px;line-height:12.5px;font-weight:normal;color:#222;white-space:nowrap;left:873.00px;width:600px;text-align:center;">Operating Cost</div><div style="position:absolute;left:1231px;top:833px;width:1px;height:19px;background:#9a9a9a"></div><div style="position:absolute;left:1234px;top:831px;width:138px;height:22px;background:#da9694"></div><div style="position:absolute;top:836.02px;font-family:'Liberation Sans',sans-serif;font-size:12.5px;line-height:12.5px;font-weight:normal;color:#222;white-space:nowrap;left:1003.00px;width:600px;text-align:center;">Account Receivable</div><div style="position:absolute;left:1374px;top:833px;width:1px;height:19px;background:#9a9a9a"></div><div style="position:absolute;left:1377px;top:831px;width:121px;height:22px;background:#da9694"></div><div style="position:absolute;top:836.02px;font-family:'Liberation Sans',sans-serif;font-size:12.5px;line-height:12.5px;font-weight:normal;color:#222;white-space:nowrap;left:1137.50px;width:600px;text-align:center;">Account Payable</div><div style="position:absolute;left:1500px;top:833px;width:1px;height:19px;background:#9a9a9a"></div><div style="position:absolute;left:1503px;top:831px;width:80px;height:22px;background:#da9694"></div><div style="position:absolute;top:836.02px;font-family:'Liberation Sans',sans-serif;font-size:12.5px;line-height:12.5px;font-weight:normal;color:#222;white-space:nowrap;left:1243.00px;width:600px;text-align:center;">Purchases</div><div style="position:absolute;left:1585px;top:833px;width:1px;height:19px;background:#9a9a9a"></div><div style="position:absolute;left:1588px;top:831px;width:56px;height:22px;background:#da9694"></div><div style="position:absolute;top:836.02px;font-family:'Liberation Sans',sans-serif;font-size:12.5px;line-height:12.5px;font-weight:normal;color:#222;white-space:nowrap;left:1316.00px;width:600px;text-align:center;">CapEx</div><div style="position:absolute;left:1646px;top:833px;width:1px;height:19px;background:#9a9a9a"></div><div style="position:absolute;left:1649px;top:831px;width:26px;height:22px;background:#da9694"></div><div style="position:absolute;top:836.02px;font-family:'Liberation Sans',sans-serif;font-size:12.5px;line-height:12.5px;font-weight:normal;color:#222;white-space:nowrap;left:1661.00px;width:14px;overflow:hidden;">Fin</div><div style="position:absolute;left:302px;top:833px;width:1px;height:19px;background:#9a9a9a"></div><div style="position:absolute;top:835.60px;font-family:'Liberation Sans',sans-serif;font-size:13px;line-height:13px;font-weight:bold;color:#f0f0f0;white-space:nowrap;left:1683.00px;">...</div><svg style="position:absolute;left:1706px;top:832px" width="20" height="20"><circle cx="10" cy="10" r="8" stroke="#e8e8e8" stroke-width="1.4" fill="none"/><path d="M10 5.5 V14.5 M5.5 10 H14.5" stroke="#e8e8e8" stroke-width="2"/></svg><div style="position:absolute;left:1744px;top:837px;width:2.5px;height:2.5px;background:#e8e8e8"></div><div style="position:absolute;left:1744px;top:841px;width:2.5px;height:2.5px;background:#e8e8e8"></div><div style="position:absolute;left:1744px;top:845px;width:2.5px;height:2.5px;background:#e8e8e8"></div><div style="position:absolute;left:1761px;top:836px;width:135px;height:13px;background:#333"></div><div style="position:absolute;left:1762px;top:836px;width:13px;height:13px;background:#4a4a4a"></div><svg style="position:absolute;left:1766px;top:838px" width="6" height="9"><path d="M5 0 L5 9 L0 4.5z" fill="#8a8a8a"/></svg><div style="position:absolute;left:1777px;top:836px;width:89px;height:13px;background:#555"></div><div style="position:absolute;left:1883px;top:836px;width:13px;height:13px;background:#4a4a4a"></div><svg style="position:absolute;left:1887px;top:838px" width="6" height="9"><path d="M0 0 L0 9 L5 4.5z" fill="#8a8a8a"/></svg><div style="position:absolute;left:0px;top:856px;width:1920px;height:22px;background:#302f2f"></div><div style="position:absolute;top:863.12px;font-family:'Liberation Sans',sans-serif;font-size:11.2px;line-height:11.2px;font-weight:normal;color:#e8e8e8;white-space:nowrap;left:7.00px;">Ready</div><div style="position:absolute;left:1620px;top:857px;width:40px;height:21px;background:#595959"></div><svg style="position:absolute;left:1632px;top:859px" width="15" height="15" shape-rendering="crispEdges"><path d="M1.5 1.5h12v12h-12z M5.5 1.5v12 M9.5 1.5v12 M1.5 5.5h12 M1.5 9.5h12" stroke="#f2f2f2" stroke-width="1.3" fill="none"/></svg><svg style="position:absolute;left:1672px;top:859px" width="16" height="15"><path d="M1.6 1.6h13v11.6h-13z" stroke="#f2f2f2" stroke-width="1.3" fill="none"/><path d="M4.3 3.6h7.6v8h-7.6z" stroke="#f2f2f2" stroke-width="1.1" fill="none"/><path d="M5.8 5.5h4.6 M5.8 7.3h4.6 M5.8 9.3h4.6" stroke="#f2f2f2" stroke-width="0.9"/></svg><svg style="position:absolute;left:1712px;top:859px" width="16" height="15"><path d="M1.6 1.6h13v11.6h-13z" stroke="#f2f2f2" stroke-width="1.3" fill="none"/><path d="M1.6 8.4h8.3V1.6 M6 1.6v6.8" stroke="#f2f2f2" stroke-width="1.1" fill="none"/></svg><div style="position:absolute;left:1746px;top:866px;width:8px;height:1.2px;background:#c8c8c8"></div><div style="position:absolute;left:1759px;top:866px;width:100px;height:1.2px;background:#c8c8c8"></div><div style="position:absolute;left:1799px;top:861px;width:5px;height:12px;background:#f0f0f0"></div><div style="position:absolute;left:1809px;top:863px;width:1px;height:7px;background:#c8c8c8"></div><div style="position:absolute;left:1863px;top:866px;width:10px;height:1.2px;background:#c8c8c8"></div><div style="position:absolute;left:1867.5px;top:861.5px;width:1.2px;height:10px;background:#c8c8c8"></div><div style="position:absolute;top:863.03px;font-family:'Liberation Sans',sans-serif;font-size:11.3px;line-height:11.3px;font-weight:normal;color:#e8e8e8;white-space:nowrap;left:1885.00px;">85%</div></div></body></html>
